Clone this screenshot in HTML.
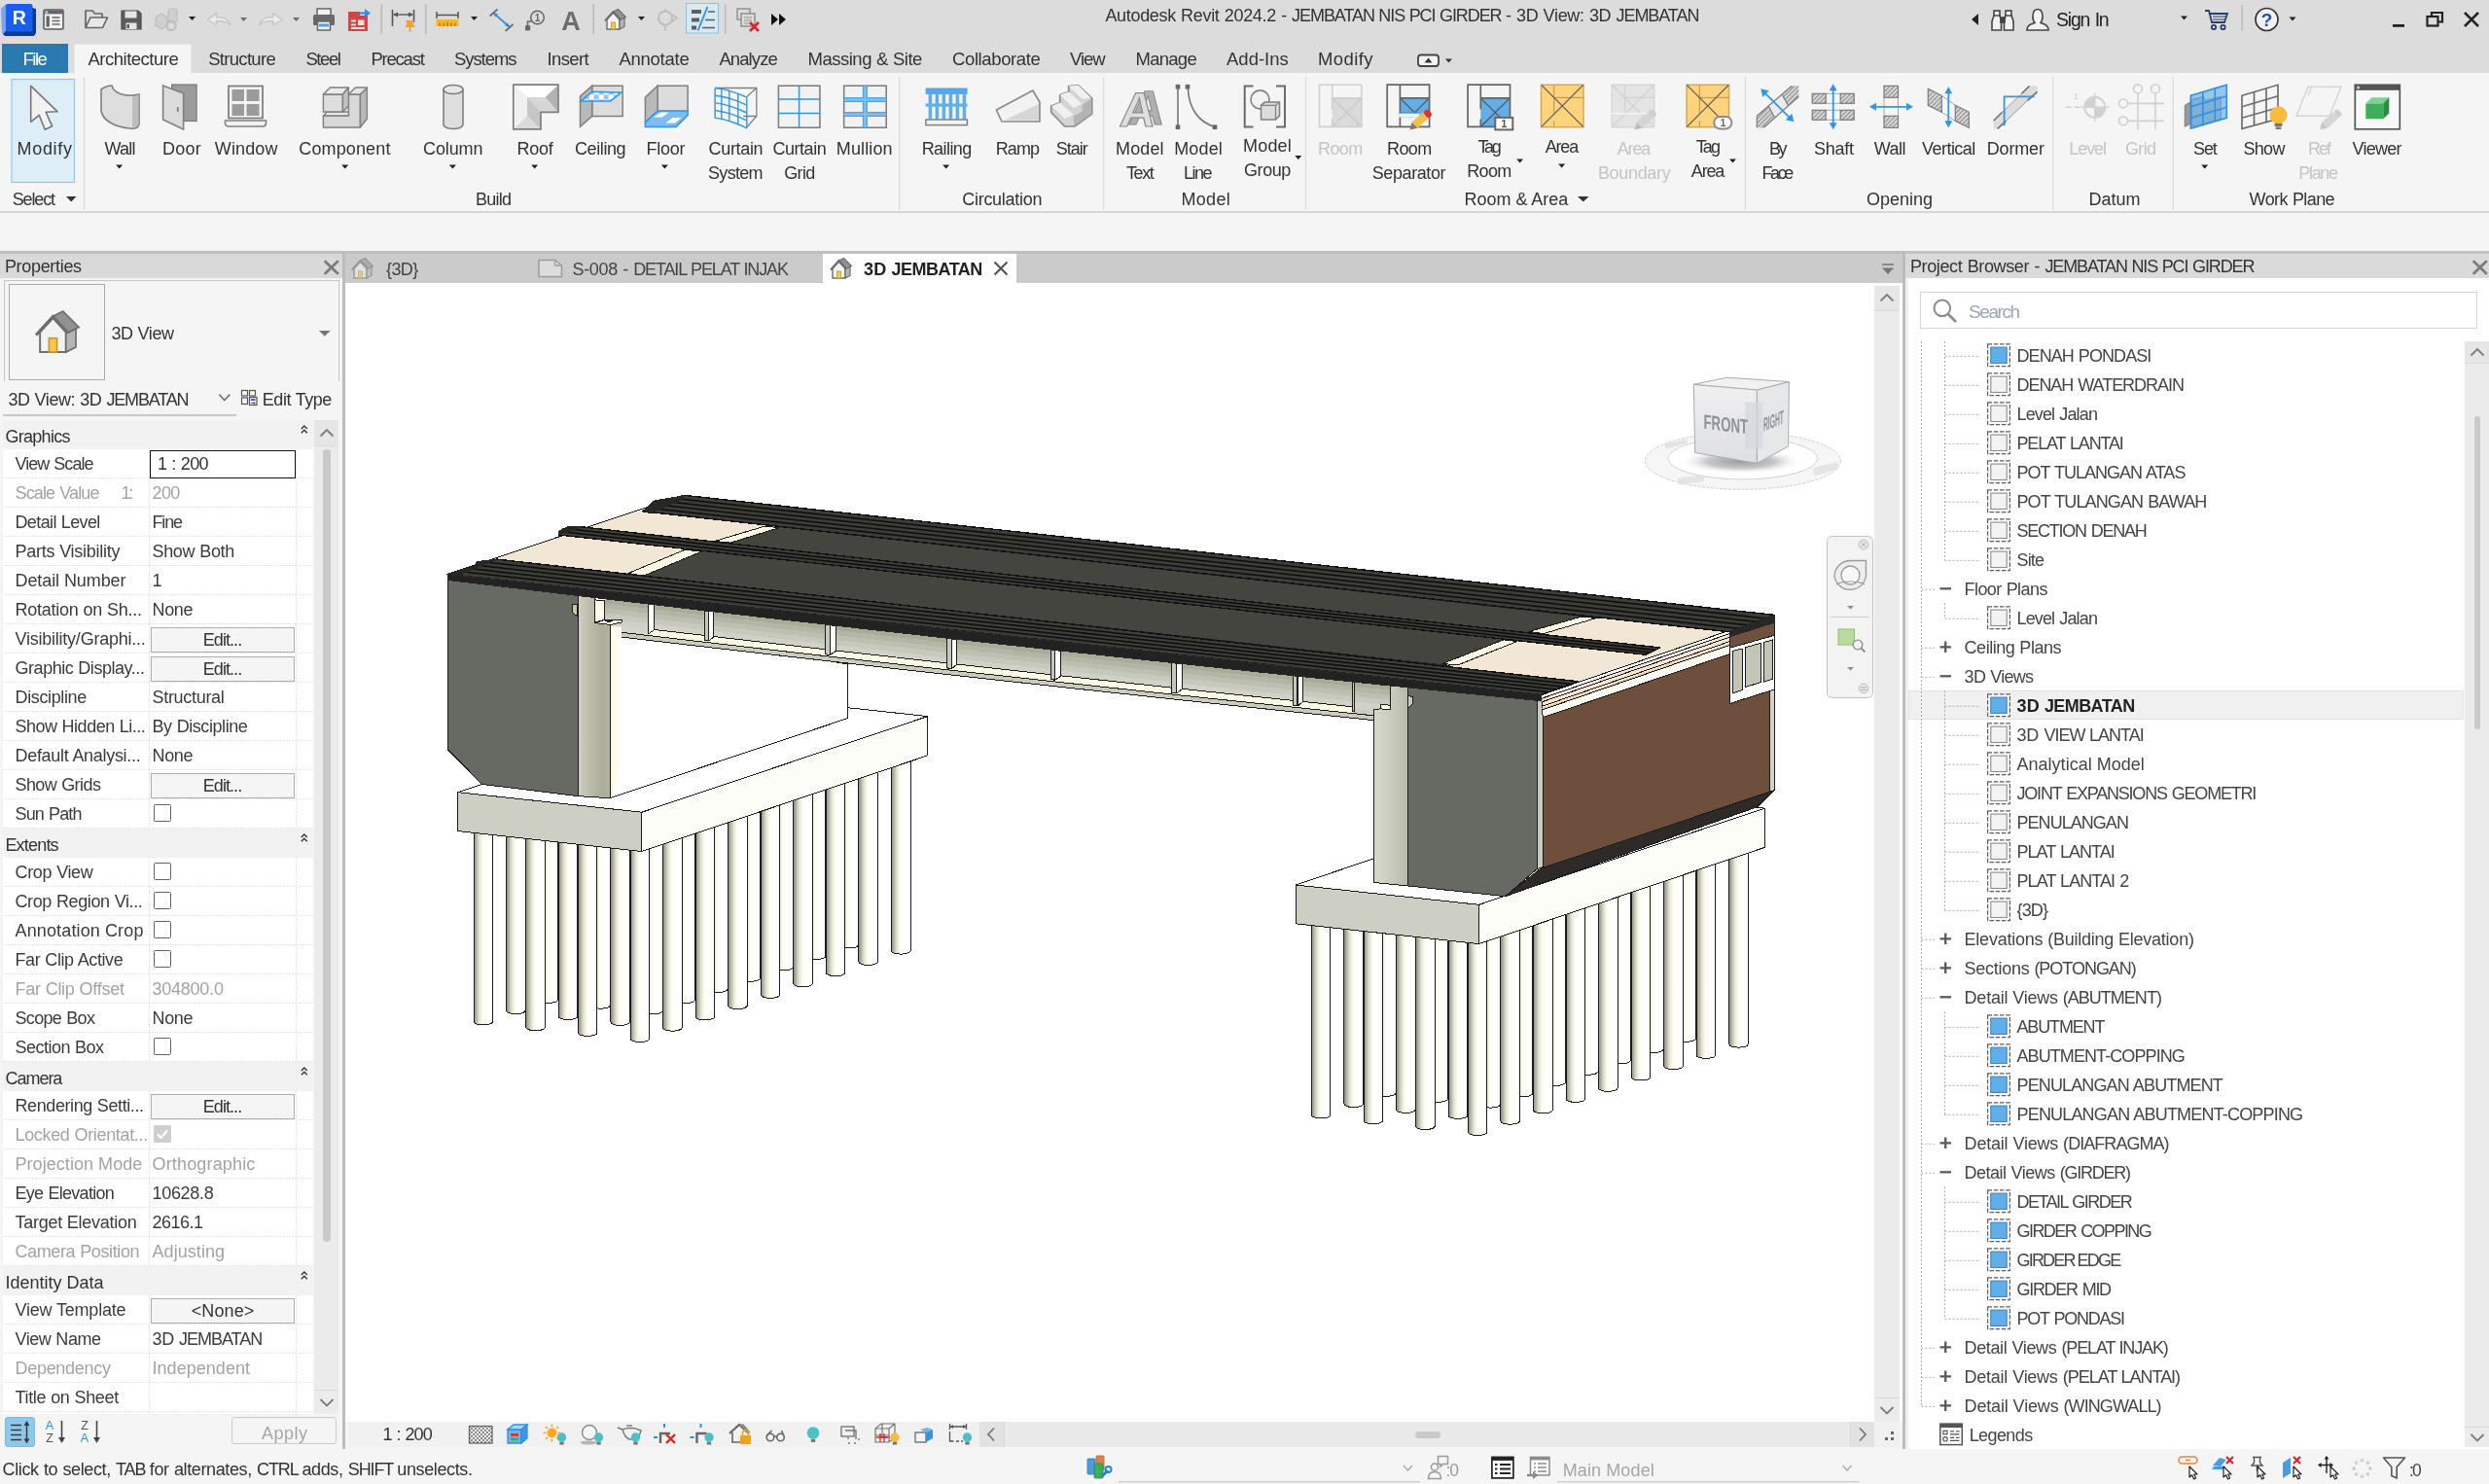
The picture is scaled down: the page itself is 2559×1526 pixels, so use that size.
<!DOCTYPE html><html><head><meta charset="utf-8"><title>Autodesk Revit 2024.2</title><style>
html,body{margin:0;padding:0;}body{width:2559px;height:1526px;position:relative;overflow:hidden;background:#f5f5f5;font-family:"Liberation Sans", sans-serif;}.a{position:absolute;display:block;}.t{position:absolute;white-space:pre;line-height:1;}
</style></head><body><div id="root" style="position:absolute;left:0;top:0;width:2559px;height:1526px;will-change:transform;">
<div class="a" style="left:0px;top:0px;width:2559px;height:76px;background:#dcdcdc;"></div>
<div class="a" style="left:0px;top:75px;width:2559px;height:143px;background:#f5f5f5;"></div>
<div class="a" style="left:0px;top:217px;width:2559px;height:2px;background:#d5d5d5;"></div>
<div class="a" style="left:0px;top:219px;width:2559px;height:39px;background:#f5f5f5;"></div>
<div class="a" style="left:0px;top:258px;width:2559px;height:3px;background:#bfbfbf;"></div>
<svg class="a" style="left:0px;top:0px;" width="2559" height="42" viewBox="0 0 2559 42"><polygon points="3,35 6,31 33,31 33,8 37,9 37,34 35,37 5,37" fill="#0b3b96"/><polygon points="1,9 6,4 6,32 2,35" fill="#79a4f0"/><rect x="6" y="4" width="27.5" height="28.5" rx="2" fill="#1a5ef0"/><text x="19.8" y="25.2" font-family="Liberation Sans, sans-serif" font-weight="700" font-size="19.5" fill="#fff" text-anchor="middle">R</text><g transform="translate(44,9)"><rect x="1" y="1" width="20" height="20" rx="1.5" fill="#f2f2f2" stroke="#5a5a5a" stroke-width="1.6"/><rect x="1.8" y="1.8" width="18.4" height="3.6" fill="#666"/><rect x="2.5" y="2.3" width="2.6" height="2.6" fill="#9ec9ee"/><rect x="3.5" y="7.5" width="3.4" height="11" fill="#666"/><path d="M9.5,9h8M9.5,12.5h8M9.5,16h8" stroke="#666" stroke-width="1.5"/></g><g transform="translate(87,10)" fill="none" stroke="#666" stroke-width="1.7" stroke-linejoin="round"><path d="M1,18V1h7l2.5,3h7.5v4"/><path d="M1,18.5l5-10.5h17.5l-5,10.5z" fill="#e8e8e8"/></g><g transform="translate(124,10)"><path d="M1,1h17l3,3v16h-20z" fill="#5c5c5c" stroke="#4a4a4a" stroke-width="1.2"/><rect x="4.5" y="1.5" width="12" height="7" fill="#e4e4e4"/><rect x="5.5" y="13.5" width="11" height="6.5" fill="#e4e4e4"/><rect x="6.5" y="15" width="2.5" height="4" fill="#5c5c5c"/></g><g transform="translate(159,8)" fill="#cfcfcf" stroke="#bdbdbd" stroke-width="1.2"><path d="M1,10l6-4 6,4v8l-6,4-6-4z"/><rect x="14" y="1" width="9" height="14" rx="3"/><circle cx="17" cy="18.5" r="4.6" fill="none" stroke-width="2"/></g><polygon points="194,17 201,17 197.5,21" fill="#222"/><g fill="#ececec" stroke="#c6c6c6" stroke-width="1.4" stroke-linejoin="round"><path d="M213.5,20.5l9-7v4c8,0 13,2 14,8c-3-3.5-7-4-14-4v4z"/><path d="M290,20.5l-9-7v4c-8,0-13,2-14,8c3-3.5 7-4 14-4v4z"/></g><polygon points="247,18 254,18 250.5,22" fill="#6c6c6c"/><polygon points="301,18 308,18 304.5,22" fill="#6c6c6c"/><g transform="translate(321,8)"><rect x="5" y="1" width="14" height="7" fill="#f2f2f2" stroke="#666" stroke-width="1.5"/><rect x="1" y="7" width="22" height="11" rx="1.5" fill="#6a6a6a"/><rect x="5.5" y="14" width="13" height="9" fill="#f2f2f2" stroke="#666" stroke-width="1.5"/><rect x="7" y="16.5" width="10" height="3" fill="#4aa0e6"/></g><g transform="translate(357,9)"><path d="M1,3h12l0,4h8v16h-20z" fill="#cf4646"/><path d="M4,12.5h5M4,16.5h5M4,20h14" stroke="#f6dede" stroke-width="1.8"/><rect x="11" y="11.5" width="6.5" height="5.5" fill="#f6dede"/><path d="M12,4.5h8" stroke="#2b8fe6" stroke-width="2.2"/><polygon points="18,0 24,4.5 18,9" fill="#2b8fe6"/></g><rect x="391.5" y="4" width="1.5" height="31" fill="#b9b9b9"/><g transform="translate(402,9)"><path d="M1.5,1v17M23.5,1v13" stroke="#555" stroke-width="1.6"/><path d="M3,6h19" stroke="#555" stroke-width="1.4"/><polygon points="2,6 7,3.5 7,8.5" fill="#555"/><polygon points="23,6 18,3.5 18,8.5" fill="#555"/><path d="M15,12h9l-1.5,3 2,4h-10l2-4z" fill="#f2a21c"/><path d="M19.5,19v5" stroke="#f2a21c" stroke-width="1.6"/></g><rect x="437" y="4" width="1.5" height="31" fill="#b9b9b9"/><g transform="translate(448,12)"><path d="M1,0v7M23,0v7M1,3.5h22" stroke="#555" stroke-width="1.5" fill="none"/><rect x="0.5" y="8" width="23" height="7" fill="#f4b32c"/><path d="M4,11.5v3.5M8,11.5v3.5M12,10.5v4.5M16,11.5v3.5M20,11.5v3.5" stroke="#9a6a00" stroke-width="1"/></g><polygon points="484,17 491,17 487.5,21" fill="#222"/><g transform="translate(503,8)"><path d="M4.500,5.500L20.500,19.500" stroke="#2b8fe6" stroke-width="1.700"/><polygon points="4,5 9,6.500 6,9.500" fill="#2b8fe6"/><polygon points="21,20 16,18.500 19,15.500" fill="#2b8fe6"/><path d="M0.500,8.500l8-7M16.500,24l8-7" stroke="#6a6a6a" stroke-width="1.700"/></g><g transform="translate(540,10)" fill="none" stroke="#666" stroke-width="1.5"><circle cx="12.5" cy="8" r="6.8"/><path d="M2.5,18v-6h4" /><rect x="0.8" y="17" width="3.6" height="3.6" fill="#666"/></g><text x="552.5" y="22" font-family="Liberation Sans, sans-serif" font-size="10" font-weight="700" fill="#666" text-anchor="middle">1</text><text x="587" y="30.5" font-family="Liberation Sans, sans-serif" font-size="28.5" font-weight="700" fill="#6e6e6e" text-anchor="middle" textLength="19.5" lengthAdjust="spacingAndGlyphs">A</text><rect x="609.5" y="4" width="1.5" height="31" fill="#b9b9b9"/><g transform="translate(621,9) scale(1.0)" opacity="1"><polygon points="3,11 3,21 16,21 16,11 9.5,4" fill="#f2f2f2" stroke="#6e6e6e" stroke-width="1.40"/><polygon points="16,11 21,9 21,18.5 16,21" fill="#b5b5b5" stroke="#6e6e6e" stroke-width="1.20"/><polygon points="9.5,3 14.5,0.5 22.5,8.5 16.5,11.5" fill="#929292" stroke="#6e6e6e" stroke-width="1.20"/><path d="M1,12.5L9.5,3.2L17,11.5" fill="none" stroke="#6e6e6e" stroke-width="2.20"/><rect x="7.5" y="14" width="4" height="7" fill="#f2c94c" stroke="#c49a2a" stroke-width="0.8"/></g><polygon points="656,17 663,17 659.5,21" fill="#222"/><g fill="none" stroke="#bdbdbd" stroke-width="2"><circle cx="684" cy="18.500" r="7"/><path d="M684,8.500v3M684,25.500v6M691,15l5,3.500-5,3.500" stroke-width="1.600"/></g><rect x="705.5" y="3.5" width="33" height="30.5" fill="#d6e9f5" stroke="#86c3ea" stroke-width="1"/><path d="M711,12h10M711,20.500h8M711,28.500h5" stroke="#5e5e5e" stroke-width="4"/><path d="M728,12h7M725,20.500h10M722,28.500h13" stroke="#5e5e5e" stroke-width="1.500"/><path d="M727.500,7L717.500,31.500" stroke="#2b8fe6" stroke-width="1.800"/><rect x="745" y="4" width="1.5" height="31" fill="#b9b9b9"/><g transform="translate(757,8)" fill="none" stroke="#909090" stroke-width="1.5"><rect x="1" y="1" width="13" height="11"/><rect x="5" y="6" width="14" height="13" fill="#dcdcdc"/><path d="M8,10h8M8,13h8M8,16h5" stroke-width="1.2"/><path d="M14,15l9,9M23,15l-9,9" stroke="#e02222" stroke-width="2.6"/></g><polygon points="793,14 800,20 793,26" fill="#111"/><polygon points="801,14 808,20 801,26" fill="#111"/><polygon points="2034,14 2034,26 2027,20" fill="#222"/><g transform="translate(2047,10)" fill="#f2f2f2" stroke="#444" stroke-width="1.6"><rect x="3" y="1" width="6" height="6"/><rect x="15" y="1" width="6" height="6"/><path d="M1,21v-9l2-6h6l1.5,6v9z"/><path d="M13.5,21v-9l1.5-6h6l2,6v9z"/><rect x="10" y="8" width="4" height="5" fill="#444"/></g><g transform="translate(2083,8)" fill="#f2f2f2" stroke="#444" stroke-width="1.6"><path d="M1,23c0-5 4-6 8-7.5c-3-4-3-14 3-14s6,10 3,14c4,1.5 8,2.5 8,7.5z"/></g><polygon points="2242,16.5 2249,16.5 2245.5,20.5" fill="#222"/><g transform="translate(2267,9)" fill="none" stroke="#2b3f6a" stroke-width="1.8"><path d="M0,2h4l3,12h13l3-9h-18"/><path d="M8,8h13M8,11h12" stroke-width="1"/><circle cx="9" cy="19" r="2.2"/><circle cx="18.5" cy="19" r="2.2"/></g><rect x="2304.5" y="5" width="1.3" height="27" fill="#b9b9b9"/><circle cx="2330.5" cy="20" r="11.5" fill="#f2f2f2" stroke="#333" stroke-width="1.7"/><text x="2330.5" y="27" font-family="Liberation Sans, sans-serif" font-size="19" font-weight="700" fill="#1d4fb8" text-anchor="middle">?</text><polygon points="2353.5,17.5 2360.5,17.5 2357.0,21.5" fill="#222"/><rect x="2460" y="25" width="12" height="2.8" fill="#222"/><g fill="none" stroke="#222" stroke-width="2.2"><rect x="2495.5" y="17" width="11" height="9.5"/><path d="M2500,16.5v-3.5h11v9.5h-4"/><path d="M2534,13l14,14M2548,13l-14,14" stroke-width="2.6"/></g></svg>
<span class="t" style="left:1136.40px;top:7.46px;font-size:18px;color:#333;letter-spacing:-0.321px;word-spacing:0.571px;">Autodesk Revit 2024.2 - <span style="letter-spacing:-1.071px">JEMBATAN NIS PCI GIRDER </span>- 3D View: 3D <span style="letter-spacing:-1.071px">JEMBATAN</span></span>
<span class="t" style="left:2114.00px;top:11.29px;font-size:19.5px;color:#222;letter-spacing:-1.204px;word-spacing:1.204px;">Sign In</span>
<div class="a" style="left:2px;top:45px;width:68px;height:30px;background:#2a79b1;"></div>
<div class="a" style="left:76px;top:45px;width:121px;height:31px;background:#f5f5f5;border:1px solid #e8e8e8;border-bottom:none;box-sizing:border-box;"></div>
<span class="t" style="left:23.50px;top:51.94px;font-size:18.5px;color:#fff;letter-spacing:-1.504px;">File</span>
<span class="t" style="left:90.50px;top:51.94px;font-size:18.5px;color:#333;letter-spacing:-0.502px;">Architecture</span>
<span class="t" style="left:214.20px;top:51.94px;font-size:18.5px;color:#333;letter-spacing:-0.695px;">Structure</span>
<span class="t" style="left:314.40px;top:51.94px;font-size:18.5px;color:#333;letter-spacing:-1.418px;">Steel</span>
<span class="t" style="left:381.50px;top:51.94px;font-size:18.5px;color:#333;letter-spacing:-1.236px;">Precast</span>
<span class="t" style="left:467.00px;top:51.94px;font-size:18.5px;color:#333;letter-spacing:-1.073px;">Systems</span>
<span class="t" style="left:562.60px;top:51.94px;font-size:18.5px;color:#333;letter-spacing:-0.636px;">Insert</span>
<span class="t" style="left:636.40px;top:51.94px;font-size:18.5px;color:#333;letter-spacing:-0.254px;">Annotate</span>
<span class="t" style="left:739.40px;top:51.94px;font-size:18.5px;color:#333;letter-spacing:-0.905px;">Analyze</span>
<span class="t" style="left:830.60px;top:51.94px;font-size:18.5px;color:#333;letter-spacing:-0.508px;word-spacing:0.508px;">Massing &amp; Site</span>
<span class="t" style="left:979.00px;top:51.94px;font-size:18.5px;color:#333;letter-spacing:-0.383px;">Collaborate</span>
<span class="t" style="left:1100.00px;top:51.94px;font-size:18.5px;color:#333;letter-spacing:-1.022px;">View</span>
<span class="t" style="left:1167.50px;top:51.94px;font-size:18.5px;color:#333;letter-spacing:-0.732px;">Manage</span>
<span class="t" style="left:1261.00px;top:51.94px;font-size:18.5px;color:#333;letter-spacing:0.006px;">Add-Ins</span>
<span class="t" style="left:1355.00px;top:51.94px;font-size:18.5px;color:#333;letter-spacing:0.400px;">Modify</span>
<svg class="a" style="left:1455px;top:50px;" width="45" height="22" viewBox="0 0 45 22"><rect x="3" y="6.5" width="21" height="11.5" rx="3" fill="#f4f4f4" stroke="#444" stroke-width="1.8"/><polygon points="9.5,14.5 17.5,14.5 13.5,9.5" fill="#333"/><polygon points="31,10.5 38,10.5 34.5,14.5" fill="#333"/></svg>
<svg class="a" style="left:0px;top:76px;" width="2559" height="142" viewBox="0 0 2559 142"><defs><pattern id="hz" width="3.2" height="3.2" patternUnits="userSpaceOnUse" patternTransform="rotate(45)"><rect width="3.2" height="3.2" fill="#d9d9d9"/><rect width="1.100" height="3.2" fill="#8a8a8a"/></pattern><pattern id="ck" width="10" height="10" patternUnits="userSpaceOnUse"><rect width="10" height="10" fill="#8fc7f3"/><rect width="5" height="5" fill="#fff"/><rect x="5" y="5" width="5" height="5" fill="#fff"/></pattern></defs><rect x="12" y="5.5" width="64.5" height="106" fill="#ddeef7" stroke="#8ccbf0" stroke-width="1.2"/><g transform="translate(30.7,11.3)"><polygon points="1,1 1,38 9.5,31 15.5,46 23,42.5 16.5,28 28.5,27.5" fill="#f2f2f2" stroke="#777" stroke-width="1.6" stroke-linejoin="round"/></g><rect x="85.9" y="3" width="1.3" height="137" fill="#dcdcdc"/><rect x="924.0" y="3" width="1.3" height="137" fill="#dcdcdc"/><rect x="1133.9" y="3" width="1.3" height="137" fill="#dcdcdc"/><rect x="1341.8000000000002" y="3" width="1.3" height="137" fill="#dcdcdc"/><rect x="1793.8000000000002" y="3" width="1.3" height="137" fill="#dcdcdc"/><rect x="2110.1" y="3" width="1.3" height="137" fill="#dcdcdc"/><rect x="2233.6" y="3" width="1.3" height="137" fill="#dcdcdc"/><g transform="translate(103.0,11.0)"><path d="M1,5C5,2 8,1 12,1C14,10 28,13 40,10V40C40,44 36,46 31,45C17,44 3,38 1,27Z" fill="#dedede" stroke="#808080" stroke-width="1.6"/><path d="M33,12.5L39.5,10.5V40C39.5,43 36,45 33,44.5Z" fill="#bdbdbd"/></g><g transform="translate(166.6,10.0)"><rect x="10" y="1" width="25.5" height="37.5" fill="#9b9b9b" stroke="#7a7a7a" stroke-width="1.2"/><polygon points="1,2 22,10 22,47 1,37" fill="#dcdcdc" stroke="#808080" stroke-width="1.6"/><rect x="15.3" y="24" width="1.8" height="5" fill="#808080"/></g><g transform="translate(230.5,11.5)"><rect x="4.5" y="1" width="35" height="33" fill="#f4f4f4" stroke="#808080" stroke-width="1.8"/><rect x="8" y="4.5" width="12.5" height="12" fill="#9b9b9b"/><rect x="23" y="4.5" width="13" height="12" fill="#9b9b9b"/><rect x="8" y="19.5" width="12.5" height="12" fill="#9b9b9b"/><rect x="23" y="19.5" width="13" height="12" fill="#9b9b9b"/><path d="M1,36.5h42v2.5c0,2-1.5,3.5-3.5,3.5h-35c-2,0-3.500-1.500-3.500-3.500z" fill="#f2f2f2" stroke="#808080" stroke-width="1.6"/></g><g transform="translate(332.4,13.0)"><g stroke="#808080" stroke-width="1.4" stroke-linejoin="round"><polygon points="0,30 26,30 26,8 38,8 38,42 0,42" fill="#d9d9d9"/><polygon points="38,8 45,1 45,33 38,42" fill="#b8b8b8"/><polygon points="26,8 33,1 45,1 38,8" fill="#e6e6e6"/><polygon points="0,30 4,26 26,26 26,30" fill="#e6e6e6"/><polygon points="0,8 20,8 20,26 0,26" fill="#dedede"/><polygon points="0,8 7,1 26,1 20,8" fill="#ebebeb"/><polygon points="20,8 26,1 26,20 20,26" fill="#c2c2c2"/></g></g><g transform="translate(455.0,10.0)"><path d="M1,6v36a10,4.500 0 0 0 20,0v-36z" fill="#dedede" stroke="#808080" stroke-width="1.6"/><ellipse cx="11" cy="6" rx="10" ry="4.500" fill="#e8e8e8" stroke="#808080" stroke-width="1.6"/></g><g transform="translate(527.0,10.4)"><polygon points="0.8,0.8 47,0.8 33.500,13.500 15,13.500" fill="#fff"/><polygon points="0.8,0.8 15,13.500 15,33 0.8,46.500" fill="#f0f0f0"/><polygon points="47,0.8 47,29 33.500,13.500" fill="#b2b2b2"/><polygon points="15,13.500 33.500,13.500 47,29 29,29" fill="#d6d6d6"/><polygon points="15,13.500 29,29 29,46.500 15,33" fill="#c6c6c6"/><polygon points="0.8,46.500 15,33 29,46.500" fill="#dadada"/><polygon points="0.8,0.8 47,0.8 47,29 29,29 29,46.500 0.8,46.500" fill="none" stroke="#808080" stroke-width="1.7"/></g><g transform="translate(595.7,11.4)"><polygon points="13,0.8 44.500,0.8 44.500,32 13,32" fill="#dcdcdc" stroke="#808080" stroke-width="1.500"/><polygon points="0.8,11.7 13,0.8 13,32 0.8,43" fill="#b9b9b9" stroke="#808080" stroke-width="1.500"/><polygon points="1.500,16.500 13,6.800 43,7.800 32,16.500" fill="url(#ck)" stroke="#2f96ea" stroke-width="1.500"/></g><g transform="translate(662.6,11.4)"><polygon points="13.500,0.8 44.500,0.8 44.500,27 13.500,27" fill="#dcdcdc" stroke="#808080" stroke-width="1.500"/><polygon points="0.8,12.700 13.500,0.8 13.500,27 0.8,38.500" fill="#b9b9b9" stroke="#808080" stroke-width="1.500"/><polygon points="0.8,38.500 13.500,26.700 44.500,26.700 44.500,31 32.500,43 0.8,43" fill="#7fbdf0" stroke="#2f96ea" stroke-width="1.500"/><polygon points="9,33 17,28 25,28 18,33" fill="#fff"/><polygon points="22,39 29,33.500 38,33.500 31.500,39" fill="#fff"/></g><g transform="translate(734.3,13.0)"><path d="M0.8,1.500H43.500V30.500L33.500,41.800M43.500,1.500L33.500,10.500M43.500,30.500H30" fill="none" stroke="#808080" stroke-width="1.300"/><polyline points="0.8,1.5 5.0,2.0 10.0,2.9 15.0,4.2 20.0,5.8 25.0,7.6 29.0,9.2 33.5,11.2" fill="none" stroke="#2f96ea" stroke-width="1.400"/><polyline points="0.8,9.2 5.0,9.7 10.0,10.7 15.0,12.0 20.0,13.6 25.0,15.4 29.0,17.1 33.5,19.1" fill="none" stroke="#2f96ea" stroke-width="1.400"/><polyline points="0.8,16.9 5.0,17.4 10.0,18.4 15.0,19.8 20.0,21.4 25.0,23.3 29.0,25.0 33.5,27.0" fill="none" stroke="#2f96ea" stroke-width="1.400"/><polyline points="0.8,24.6 5.0,25.2 10.0,26.2 15.0,27.6 20.0,29.2 25.0,31.1 29.0,32.9 33.5,34.9" fill="none" stroke="#2f96ea" stroke-width="1.400"/><polyline points="0.8,32.3 5.0,32.9 10.0,33.9 15.0,35.4 20.0,37.0 25.0,39.0 29.0,40.7 33.5,42.8" fill="none" stroke="#2f96ea" stroke-width="1.400"/><path d="M0.8,1.5V32.3" stroke="#2f96ea" stroke-width="1.400"/><path d="M7.5,2.4V33.4" stroke="#2f96ea" stroke-width="1.400"/><path d="M15.5,4.3V35.5" stroke="#2f96ea" stroke-width="1.400"/><path d="M24.5,7.4V38.8" stroke="#2f96ea" stroke-width="1.400"/><path d="M33.5,11.2V42.8" stroke="#2f96ea" stroke-width="1.400"/></g><g transform="translate(799.6,11.4)"><rect x="0.8" y="0.8" width="42.500" height="43" fill="#f2f2f2" stroke="#808080" stroke-width="1.600"/><path d="M22,1V43.500M1,14.500H43M1,29H43" stroke="#2f96ea" stroke-width="1.500"/></g><g transform="translate(866.9,11.4)"><rect x="0.8" y="0.8" width="43.500" height="43" fill="#f2f2f2" stroke="#808080" stroke-width="1.600"/><path d="M22.500,1V43.500M1,15H44M1,30H44" stroke="#4fa0e4" stroke-width="5"/><path d="M22.500,1V43.500M1,15H44M1,30H44" stroke="#7fc0f2" stroke-width="2.5"/></g><g transform="translate(951.1,14.5)"><rect x="0.5" y="0" width="43" height="6.500" fill="#57a6e6"/><rect x="0.5" y="16" width="43" height="3.200" fill="#62aee8"/><rect x="3.5" y="5" width="3.600" height="27" fill="#62aee8"/><rect x="10.5" y="5" width="3.600" height="27" fill="#62aee8"/><rect x="17.5" y="5" width="3.600" height="27" fill="#62aee8"/><rect x="24.5" y="5" width="3.600" height="27" fill="#62aee8"/><rect x="31.5" y="5" width="3.600" height="27" fill="#62aee8"/><rect x="38.5" y="5" width="3.600" height="27" fill="#62aee8"/><rect x="0.8" y="32.500" width="42.500" height="5.600" fill="#f4f4f4" stroke="#808080" stroke-width="1.500"/></g><g transform="translate(1023.4,16.0)"><polygon points="1,21 38.500,1 45.500,13 45.500,33 6.500,33" fill="#f2f2f2" stroke="#8a8a8a" stroke-width="1.700" stroke-linejoin="round"/><polygon points="9.500,31.500 44.500,15 44.500,31.500" fill="#d6d6d6"/></g><g transform="translate(1079.7,11.0)"><polygon points="1,22 10,18.500 10,10.500 19,7.500 19,1.500 29,0.8 43,14 43,30 25,43 15,43 1,28.500" fill="#d4d4d4" stroke="#8a8a8a" stroke-width="1.700" stroke-linejoin="round"/><polygon points="10,10.500 19,7.500 33,20 24,24" fill="#f0f0f0"/><polygon points="19,1.500 29,0.8 42,13.500 33,15" fill="#f0f0f0"/><polygon points="1.500,22 10,18.500 24,31 15,35" fill="#f0f0f0"/><polygon points="25,42.500 42.500,30 42.500,14.500 33,20.500 33,28 24,32 24,36" fill="#b4b4b4"/></g><g transform="translate(1148.6,13.0)"><text x="33" y="39" font-family="Liberation Sans, sans-serif" font-weight="700" font-size="50" fill="#b0b0b0" stroke="#8a8a8a" stroke-width="1" text-anchor="middle" transform="skewX(-6)">A</text><text x="24" y="40.500" font-family="Liberation Sans, sans-serif" font-weight="700" font-size="50" fill="#dedede" stroke="#8a8a8a" stroke-width="1.200" text-anchor="middle" transform="skewX(-6)">A</text></g><g transform="translate(1208.2,10.4)"><path d="M2.800,4V43M13,4Q15,36 40.500,44" fill="none" stroke="#777" stroke-width="1.600"/><rect x="0.500" y="0.500" width="4.600" height="4.600" fill="#666"/><rect x="0.500" y="42" width="4.600" height="4.600" fill="#666"/><rect x="10.500" y="0.500" width="4.600" height="4.600" fill="#666"/><rect x="38.500" y="42" width="4.600" height="4.600" fill="#666"/></g><g transform="translate(1278.5,11.4)"><path d="M10,1.200H1.200V43H10M33.500,1.200H42.500V43H33.500" fill="none" stroke="#6a6a6a" stroke-width="2"/><circle cx="17" cy="15" r="9.500" fill="#f2f2f2" stroke="#808080" stroke-width="1.600"/><path d="M18,21l4-3.500h15v14l-4,4h-15z" fill="#dcdcdc" stroke="#808080" stroke-width="1.500" stroke-linejoin="round"/><path d="M33,21v14.500M18,21h15l4-3.500" fill="none" stroke="#808080" stroke-width="1.200"/></g><g transform="translate(1355.7,10.4)"><rect x="14" y="14.500" width="30" height="29.500" fill="#dadada"/><path d="M14,14.500L44,44M44,14.500L14,44" stroke="#c6c6c6" stroke-width="1.300"/><path d="M0.800,0.800H44.200V44H0.800ZM14,0.800V26M14,36V44M14,14.500H44" fill="none" stroke="#d0d0d0" stroke-width="1.600"/></g><g transform="translate(1425.4,10.4)"><rect x="14" y="14.500" width="30" height="20" fill="#62aee8"/><path d="M14,14.500L34,34.500M44,14.500L24,34.500" stroke="#555" stroke-width="1.300"/><path d="M0.800,0.800H44.200V44H0.800ZM14,0.800V44M14,14.500H44" fill="none" stroke="#666" stroke-width="1.700"/><path d="M14,29.500H33" stroke="#2f96ea" stroke-width="1.500"/><rect x="13" y="30.300" width="21" height="4" fill="#f4f4f4"/><g transform="translate(24,47) rotate(-42)"><polygon points="0,0 7,-4.200 7,4.200" fill="#7a7a7a"/><rect x="7" y="-4.200" width="15" height="8.400" fill="#f3c04a"/><rect x="22" y="-4.200" width="6" height="8.400" rx="2.500" fill="#ee2b2b"/></g></g><g transform="translate(1508.3,10.4)"><rect x="14" y="14.500" width="30" height="29.500" fill="#62aee8"/><path d="M14,14.500L44,44M44,14.500L14,44" stroke="#555" stroke-width="1.300"/><path d="M0.800,0.800H44.200V44H0.800ZM14,0.800V26M14,36V44M14,14.500H44" fill="none" stroke="#666" stroke-width="1.700"/><rect x="29" y="34.500" width="18" height="12.500" fill="#fff" stroke="#666" stroke-width="2"/><text x="38" y="45" font-family="Liberation Sans, sans-serif" font-weight="700" font-size="11" fill="#555" text-anchor="middle">1</text></g><g transform="translate(1583.7,10.4)"><rect x="0.800" y="0.800" width="43.500" height="43.500" fill="#fdd37e" stroke="#d6aa50" stroke-width="1.500"/><path d="M14,1V30M14,14H44M14,38V44" stroke="#b89244" stroke-width="1"/><path d="M1,1L44,44M44,1L1,44" stroke="#5e5e5e" stroke-width="1.300"/></g><g transform="translate(1656.4,10.4)"><rect x="0.800" y="0.800" width="43.500" height="43.500" fill="#e4e4e4" stroke="#d4d4d4" stroke-width="1.300"/><path d="M14,1V30M14,14H44" stroke="#d0d0d0" stroke-width="1"/><path d="M1,1L44,44M44,1L1,44" stroke="#cfcfcf" stroke-width="1.300"/><rect x="0" y="29.500" width="45" height="1.500" fill="#f5f5f5"/><g transform="translate(24,47) rotate(-42)"><polygon points="0,0 7,-4.200 7,4.200" fill="#bdbdbd"/><rect x="7" y="-4.200" width="15" height="8.400" fill="#d4d4d4"/><rect x="22" y="-4.200" width="6" height="8.400" rx="2.500" fill="#cfcfcf"/></g></g><g transform="translate(1733.3,10.4)"><rect x="0.800" y="0.800" width="43.500" height="43.500" fill="#fdd37e" stroke="#d6aa50" stroke-width="1.500"/><path d="M14,1V30M14,14H44M14,38V44" stroke="#b89244" stroke-width="1"/><path d="M1,1L44,44M44,1L1,44" stroke="#5e5e5e" stroke-width="1.300"/><rect x="29" y="33.500" width="18" height="12.500" rx="6" fill="#fff" stroke="#8a8a8a" stroke-width="2"/><text x="38" y="43.800" font-family="Liberation Sans, sans-serif" font-weight="700" font-size="10.500" fill="#666" text-anchor="middle">1</text></g><g transform="translate(1805.3,10.3)"><polygon points="13,23 27,11 33,22 19,34" fill="#ebebeb"/><polygon points="1,33 13,23 19,34 8,45 1,45" fill="url(#hz)"/><polygon points="27,11 37,2 44,2 44,13 33,22" fill="url(#hz)"/><path d="M1,33L37,2M8,45L44,13M1,33V45M13,23L19,34M27,11L33,22" stroke="#7a7a7a" stroke-width="1.200" fill="none"/><path d="M9,9L35,35" stroke="#2f96ea" stroke-width="1.800"/><polygon points="5,5 13.500,7 7,13.500" fill="#2f96ea"/><polygon points="39,39 30.500,37 37,30.500" fill="#2f96ea"/></g><g transform="translate(1862.2,10.3)"><path d="M15,10H30M15,20H30M15,27H30M15,37H30" stroke="#a8a8a8" stroke-width="1"/><rect x="1" y="10" width="14" height="10" fill="url(#hz)" stroke="#7a7a7a" stroke-width="1.200"/><rect x="1" y="27" width="14" height="10" fill="url(#hz)" stroke="#7a7a7a" stroke-width="1.200"/><rect x="30" y="10" width="14" height="10" fill="url(#hz)" stroke="#7a7a7a" stroke-width="1.200"/><rect x="30" y="27" width="14" height="10" fill="url(#hz)" stroke="#7a7a7a" stroke-width="1.200"/><path d="M22.500,5V42" stroke="#2f96ea" stroke-width="1.800"/><polygon points="22.500,0 26.500,7 18.500,7" fill="#2f96ea"/><polygon points="22.500,47 26.500,40 18.500,40" fill="#2f96ea"/></g><g transform="translate(1922.0,10.3)"><path d="M15,14V33M29.500,14V33" stroke="#a8a8a8" stroke-width="1"/><rect x="15" y="2" width="14.500" height="12" fill="url(#hz)" stroke="#7a7a7a" stroke-width="1.200"/><rect x="15" y="33" width="14.500" height="12" fill="url(#hz)" stroke="#7a7a7a" stroke-width="1.200"/><path d="M5,23.500H40" stroke="#2f96ea" stroke-width="1.800"/><polygon points="0,23.500 7,19.500 7,27.500" fill="#2f96ea"/><polygon points="45,23.500 38,19.500 38,27.500" fill="#2f96ea"/></g><g transform="translate(1981.3,10.3)"><path d="M15,12L29,22M15,29L29,38" stroke="#a8a8a8" stroke-width="1"/><polygon points="1,5 15,12 15,29 1,22" fill="url(#hz)" stroke="#7a7a7a" stroke-width="1.200"/><polygon points="29,22 43,29 43,45 29,38" fill="url(#hz)" stroke="#7a7a7a" stroke-width="1.200"/><path d="M22,9V40" stroke="#2f96ea" stroke-width="1.800"/><polygon points="22,3 26,10 18,10" fill="#2f96ea"/><polygon points="22,45 26,38 18,38" fill="#2f96ea"/></g><g transform="translate(2048.6,10.3)"><polygon points="1,38 38,2 46,2 46,8 5,46 1,46" fill="#dcdcdc"/><path d="M1,38L10,29M30,10L38,2M5,46L14,38M36,17L46,8" stroke="#6e6e6e" stroke-width="1.600" fill="none"/><path d="M10,29L30,10M14,38L36,17" stroke="#9a9a9a" stroke-width="1" fill="none"/><path d="M12,43V13H43" fill="none" stroke="#2f96ea" stroke-width="1.800"/></g><g transform="translate(2123.8,10.3)"><path d="M0,24h6M9,24h5" stroke="#cfcfcf" stroke-width="1.500"/><circle cx="30" cy="24" r="10.500" fill="none" stroke="#d2d2d2" stroke-width="2"/><path d="M30,13.500A10.500,10.500 0 0 0 19.500,24H30ZM30,34.500A10.500,10.500 0 0 0 40.500,24H30Z" fill="#d2d2d2"/><path d="M30,9V39M15,24H45" stroke="#d2d2d2" stroke-width="1.400"/><text x="8" y="16" font-family="Liberation Sans, sans-serif" font-size="9" fill="#cfcfcf">1</text></g><g transform="translate(2178.0,10.3)"><g fill="#f5f5f5" stroke="#d2d2d2" stroke-width="1.700"><path d="M20,9V47M38,9V47M9,20H47M9,38H47"/><circle cx="20" cy="5" r="4.500"/><circle cx="38" cy="5" r="4.500"/><circle cx="5" cy="20" r="4.500"/><circle cx="5" cy="38" r="4.500"/></g></g><g transform="translate(2245.3,10.3)"><polygon points="1,22 8,18 8,40 1,44" fill="#9a9a9a" stroke="#777" stroke-width="1"/><polygon points="8,16 20,13 22,17 38,13 38,36 8,44" fill="#b9b9b9" stroke="#808080" stroke-width="1"/><polygon points="7,12 44,1 44,35 7,46" fill="#5aa9ea" fill-opacity="0.62" stroke="#2f8fe0" stroke-width="1.600"/><path d="M19.500,8.500V42.500M32,4.800V38.500M7,23.500L44,12.500M7,35L44,24" stroke="#2f8fe0" stroke-width="1.500"/></g><g transform="translate(2304.0,10.3)"><path d="M1,12L38,1V36L1,46ZM13.500,8.300V42.500M26,4.600V39.300M1,23.500L38,12.500M1,35L38,24.500" fill="none" stroke="#6e6e6e" stroke-width="1.700"/><circle cx="38.500" cy="32" r="9" fill="#f9bc3c"/><rect x="34.500" y="40.500" width="8" height="3.200" fill="#777"/><rect x="35.500" y="44.200" width="6" height="2.500" rx="1" fill="#777"/></g><g transform="translate(2361.0,10.3)"><path d="M12,3L46,3L34,33L0,33Z M16,3L12,12 M38,33L34,44" fill="none" stroke="#d6d6d6" stroke-width="1.500"/><g transform="translate(24,47) rotate(-42)"><polygon points="0,0 7,-4.200 7,4.200" fill="#c6c6c6"/><rect x="7" y="-4.200" width="15" height="8.400" fill="#d6d6d6"/><rect x="22" y="-4.200" width="6" height="8.400" rx="2.500" fill="#d0d0d0"/></g></g><g transform="translate(2420.3,10.3)"><rect x="1" y="1" width="46" height="45.500" fill="#f8f8f8" stroke="#555" stroke-width="1.700"/><rect x="1" y="1" width="46" height="5.500" fill="#555"/><rect x="3" y="2.500" width="2.500" height="2.500" fill="#ddd"/><polygon points="12,20 30,20 30,36 12,36" fill="#3fae5a"/><polygon points="12,20 18,14 36,14 30,20" fill="#7fd392"/><polygon points="30,20 36,14 36,30 30,36" fill="#2c8c45"/></g><polygon points="119.1,93.5 126.1,93.5 122.6,97.5" fill="#222"/><polygon points="351.2,93.5 358.2,93.5 354.7,97.5" fill="#222"/><polygon points="461.9,93.5 468.9,93.5 465.4,97.5" fill="#222"/><polygon points="546.1,93.5 553.1,93.5 549.6,97.5" fill="#222"/><polygon points="679.9,93.5 686.9,93.5 683.4,97.5" fill="#222"/><polygon points="969.1,93.5 976.1,93.5 972.6,97.5" fill="#222"/><polygon points="2263.2,93.5 2270.2,93.5 2266.7,97.5" fill="#222"/><polygon points="1602.1,92.5 1609.1,92.5 1605.6,96.5" fill="#222"/><polygon points="1331.3,84 1338.3,84 1334.8,88" fill="#222"/><polygon points="1559.1,87.5 1566.1,87.5 1562.6,91.5" fill="#222"/><polygon points="1778.0,87.5 1785.0,87.5 1781.5,91.5" fill="#222"/><polygon points="68,126 78.5,126 73.25,131.5" fill="#333"/><polygon points="1622,126 1633.5,126 1627.75,131.5" fill="#333"/></svg>
<span class="t" style="left:17.50px;top:144.06px;font-size:18px;color:#333;letter-spacing:0.697px;">Modify</span>
<span class="t" style="left:107.60px;top:144.06px;font-size:18px;color:#333;letter-spacing:-0.848px;">Wall</span>
<span class="t" style="left:167.00px;top:144.06px;font-size:18px;color:#333;letter-spacing:0.228px;">Door</span>
<span class="t" style="left:220.80px;top:144.06px;font-size:18px;color:#333;letter-spacing:0.134px;">Window</span>
<span class="t" style="left:307.30px;top:144.06px;font-size:18px;color:#333;letter-spacing:0.130px;">Component</span>
<span class="t" style="left:435.00px;top:144.06px;font-size:18px;color:#333;letter-spacing:-0.106px;">Column</span>
<span class="t" style="left:531.50px;top:144.06px;font-size:18px;color:#333;letter-spacing:-0.244px;">Roof</span>
<span class="t" style="left:591.00px;top:144.06px;font-size:18px;color:#333;letter-spacing:-0.405px;">Ceiling</span>
<span class="t" style="left:664.60px;top:144.06px;font-size:18px;color:#333;letter-spacing:-0.304px;">Floor</span>
<span class="t" style="left:728.60px;top:144.06px;font-size:18px;color:#333;letter-spacing:-0.339px;">Curtain</span>
<span class="t" style="left:728.00px;top:169.16px;font-size:18px;color:#333;letter-spacing:-0.683px;">System</span>
<span class="t" style="left:794.40px;top:144.06px;font-size:18px;color:#333;letter-spacing:-0.455px;">Curtain</span>
<span class="t" style="left:806.30px;top:169.16px;font-size:18px;color:#333;letter-spacing:-0.705px;">Grid</span>
<span class="t" style="left:859.80px;top:144.06px;font-size:18px;color:#333;letter-spacing:0.128px;">Mullion</span>
<span class="t" style="left:947.70px;top:144.06px;font-size:18px;color:#333;letter-spacing:-0.572px;">Railing</span>
<span class="t" style="left:1023.80px;top:144.06px;font-size:18px;color:#333;letter-spacing:-0.939px;">Ramp</span>
<span class="t" style="left:1085.70px;top:144.06px;font-size:18px;color:#333;letter-spacing:-0.979px;">Stair</span>
<span class="t" style="left:1147.00px;top:144.06px;font-size:18px;color:#333;letter-spacing:0.142px;">Model</span>
<span class="t" style="left:1158.00px;top:169.16px;font-size:18px;color:#333;letter-spacing:-1.439px;">Text</span>
<span class="t" style="left:1207.20px;top:144.06px;font-size:18px;color:#333;letter-spacing:0.142px;">Model</span>
<span class="t" style="left:1216.90px;top:169.16px;font-size:18px;color:#333;letter-spacing:-1.510px;">Line</span>
<span class="t" style="left:1278.10px;top:140.66px;font-size:18px;color:#333;letter-spacing:0.167px;">Model</span>
<span class="t" style="left:1279.00px;top:165.66px;font-size:18px;color:#333;letter-spacing:-0.433px;">Group</span>
<span class="t" style="left:1355.00px;top:144.06px;font-size:18px;color:#c4c4c4;letter-spacing:-0.572px;">Room</span>
<span class="t" style="left:1426.00px;top:144.06px;font-size:18px;color:#333;letter-spacing:-0.605px;">Room</span>
<span class="t" style="left:1410.70px;top:169.16px;font-size:18px;color:#333;letter-spacing:-0.395px;">Separator</span>
<span class="t" style="left:1519.40px;top:142.46px;font-size:18px;color:#333;letter-spacing:-2.266px;">Tag</span>
<span class="t" style="left:1508.30px;top:166.66px;font-size:18px;color:#333;letter-spacing:-0.672px;">Room</span>
<span class="t" style="left:1588.70px;top:142.46px;font-size:18px;color:#333;letter-spacing:-1.177px;">Area</span>
<span class="t" style="left:1662.80px;top:144.06px;font-size:18px;color:#c4c4c4;letter-spacing:-1.210px;">Area</span>
<span class="t" style="left:1642.90px;top:169.16px;font-size:18px;color:#c4c4c4;letter-spacing:-0.323px;">Boundary</span>
<span class="t" style="left:1743.80px;top:142.46px;font-size:18px;color:#333;letter-spacing:-1.966px;">Tag</span>
<span class="t" style="left:1738.80px;top:166.66px;font-size:18px;color:#333;letter-spacing:-1.177px;">Area</span>
<span class="t" style="left:1819.00px;top:144.06px;font-size:18px;color:#333;letter-spacing:-2.616px;">By</span>
<span class="t" style="left:1811.50px;top:169.16px;font-size:18px;color:#333;letter-spacing:-2.410px;">Face</span>
<span class="t" style="left:1865.00px;top:144.06px;font-size:18px;color:#333;letter-spacing:-0.258px;">Shaft</span>
<span class="t" style="left:1926.70px;top:144.06px;font-size:18px;color:#333;letter-spacing:-0.515px;">Wall</span>
<span class="t" style="left:1976.00px;top:144.06px;font-size:18px;color:#333;letter-spacing:-0.533px;">Vertical</span>
<span class="t" style="left:2042.70px;top:144.06px;font-size:18px;color:#333;letter-spacing:-0.143px;">Dormer</span>
<span class="t" style="left:2127.30px;top:144.06px;font-size:18px;color:#c4c4c4;letter-spacing:-1.083px;">Level</span>
<span class="t" style="left:2185.00px;top:144.06px;font-size:18px;color:#c4c4c4;letter-spacing:-0.672px;">Grid</span>
<span class="t" style="left:2255.00px;top:144.06px;font-size:18px;color:#333;letter-spacing:-1.116px;">Set</span>
<span class="t" style="left:2306.40px;top:144.06px;font-size:18px;color:#333;letter-spacing:-0.644px;">Show</span>
<span class="t" style="left:2373.00px;top:144.06px;font-size:18px;color:#c4c4c4;letter-spacing:-2.008px;">Ref</span>
<span class="t" style="left:2363.30px;top:169.16px;font-size:18px;color:#c4c4c4;letter-spacing:-1.337px;">Plane</span>
<span class="t" style="left:2418.50px;top:144.06px;font-size:18px;color:#333;letter-spacing:-0.721px;">Viewer</span>
<span class="t" style="left:12.70px;top:196.46px;font-size:18px;color:#333;letter-spacing:-1.146px;">Select</span>
<span class="t" style="left:488.90px;top:196.46px;font-size:18px;color:#333;letter-spacing:-0.733px;">Build</span>
<span class="t" style="left:989.20px;top:196.46px;font-size:18px;color:#333;letter-spacing:-0.265px;">Circulation</span>
<span class="t" style="left:1214.50px;top:196.46px;font-size:18px;color:#333;letter-spacing:0.292px;">Model</span>
<span class="t" style="left:1505.60px;top:196.46px;font-size:18px;color:#333;letter-spacing:-0.058px;word-spacing:0.058px;">Room &amp; Area</span>
<span class="t" style="left:1919.00px;top:196.46px;font-size:18px;color:#333;letter-spacing:-0.010px;">Opening</span>
<span class="t" style="left:2147.60px;top:196.46px;font-size:18px;color:#333;letter-spacing:-0.054px;">Datum</span>
<span class="t" style="left:2312.60px;top:196.46px;font-size:18px;color:#333;letter-spacing:-0.590px;word-spacing:0.590px;">Work Plane</span>
<div class="a" style="left:0px;top:261px;width:352px;height:1229px;background:#f5f5f5;"></div>
<div class="a" style="left:0px;top:261px;width:352px;height:25px;background:#d9d9d9;"></div>
<div class="a" style="left:352px;top:261px;width:3px;height:1229px;background:#bcbcbc;"></div>
<span class="t" style="left:4.90px;top:264.86px;font-size:18px;color:#333;letter-spacing:-0.316px;">Properties</span>
<svg class="a" style="left:332px;top:266px;" width="18" height="18" viewBox="0 0 18 18"><path d="M2.500,3L15,15M15,3L2.500,15" stroke="#7c7c7c" stroke-width="2.800" stroke-linecap="round"/></svg>
<div class="a" style="left:4px;top:288px;width:345px;height:104px;border:1px solid #c6c6c6;box-sizing:border-box;border-bottom:none;"></div>
<div class="a" style="left:9px;top:292px;width:99px;height:99px;background:#f5f5f5;border:1.5px solid #a9a9a9;box-sizing:border-box;"></div>
<svg class="a" style="left:33px;top:317px;" width="54" height="52" viewBox="0 0 54 52"><g transform="translate(2,2) scale(2.05)" opacity="1"><polygon points="3,11 3,21 16,21 16,11 9.5,4" fill="#f2f2f2" stroke="#6e6e6e" stroke-width="0.95"/><polygon points="16,11 21,9 21,18.5 16,21" fill="#b5b5b5" stroke="#6e6e6e" stroke-width="0.82"/><polygon points="9.5,3 14.5,0.5 22.5,8.5 16.5,11.5" fill="#929292" stroke="#6e6e6e" stroke-width="0.82"/><path d="M1,12.5L9.5,3.2L17,11.5" fill="none" stroke="#6e6e6e" stroke-width="1.50"/><rect x="7.5" y="14" width="4" height="7" fill="#f2c94c" stroke="#c49a2a" stroke-width="0.8"/></g></svg>
<span class="t" style="left:114.40px;top:333.76px;font-size:18px;color:#333;letter-spacing:-0.421px;word-spacing:0.421px;">3D View</span>
<svg class="a" style="left:326px;top:338px;" width="16" height="10" viewBox="0 0 16 10"><polygon points="2,2 13.700,2 7.800,7.800" fill="#777"/></svg>
<span class="t" style="left:8.40px;top:401.76px;font-size:18px;color:#333;letter-spacing:-0.413px;word-spacing:0.413px;">3D View: 3D <span style="letter-spacing:-1.163px">JEMBATAN</span></span>
<svg class="a" style="left:223px;top:403px;" width="16" height="12" viewBox="0 0 16 12"><path d="M2.300,2.600L7.800,8.600L13.300,2.600" fill="none" stroke="#777" stroke-width="1.700"/></svg>
<svg class="a" style="left:246px;top:399px;" width="20" height="20" viewBox="0 0 20 20"><g fill="#f5f5f5" stroke="#555" stroke-width="1.200"><rect x="2.500" y="2.500" width="6" height="5.500"/><rect x="10.500" y="2.500" width="6" height="5.500"/><rect x="2.500" y="10" width="6" height="6.500"/><rect x="10.500" y="9.500" width="7.500" height="8"/></g><rect x="12" y="11" width="4.500" height="2" fill="#2b6fd0"/><path d="M12,15.500h4.500M14.500,14l1.500,1.500-1.500,1.500" fill="none" stroke="#555" stroke-width="0.900"/></svg>
<span class="t" style="left:269.80px;top:401.76px;font-size:18px;color:#333;letter-spacing:-0.460px;word-spacing:0.460px;">Edit Type</span>
<div class="a" style="left:3px;top:426px;width:240px;height:2px;background:#c9c9c9;"></div>
<div class="a" style="left:3px;top:432px;width:319px;height:1022px;background:#ffffff;"></div>
<svg class="a" style="left:0px;top:0px;" width="352" height="1460" viewBox="0 0 352 1460"><g stroke="#dedede" stroke-width="1" stroke-dasharray="1.500,1.500" fill="none"><path d="M3,491.5H322" /><path d="M3,521.5H322" /><path d="M3,551.5H322" /><path d="M3,581.5H322" /><path d="M3,611.5H322" /><path d="M3,641.5H322" /><path d="M3,671.5H322" /><path d="M3,701.5H322" /><path d="M3,731.5H322" /><path d="M3,761.5H322" /><path d="M3,791.5H322" /><path d="M3,821.5H322" /><path d="M3,851.5H322" /><path d="M3,911.5H322" /><path d="M3,941.5H322" /><path d="M3,971.5H322" /><path d="M3,1001.5H322" /><path d="M3,1031.5H322" /><path d="M3,1061.5H322" /><path d="M3,1091.5H322" /><path d="M3,1151.5H322" /><path d="M3,1181.5H322" /><path d="M3,1211.5H322" /><path d="M3,1241.5H322" /><path d="M3,1271.5H322" /><path d="M3,1301.5H322" /><path d="M3,1361.5H322" /><path d="M3,1391.5H322" /><path d="M3,1421.5H322" /><path d="M3,1451.5H322" /><path d="M153.500,462V1454M304.500,462V1454"/></g></svg>
<div class="a" style="left:3px;top:432px;width:319px;height:30px;background:#f2f2f2;"></div>
<span class="t" style="left:5.40px;top:440.36px;font-size:18px;color:#333;letter-spacing:-0.704px;">Graphics</span>
<svg class="a" style="left:308px;top:436px;" width="10" height="11" viewBox="0 0 10 11"><path d="M1.800,5L4.800,2L7.800,5M1.800,9.200L4.800,6.200L7.800,9.200" fill="none" stroke="#333" stroke-width="1.300"/></svg>
<span class="t" style="left:15.50px;top:468.16px;font-size:18px;color:#3b3b3b;letter-spacing:-0.965px;word-spacing:0.965px;">View Scale</span>
<div class="a" style="left:154px;top:463px;width:150px;height:29px;background:#fff;border:1.5px solid #111;box-sizing:border-box;"></div>
<span class="t" style="left:161.90px;top:468.16px;font-size:18px;color:#333;letter-spacing:-0.587px;word-spacing:0.587px;">1 : 200</span>
<span class="t" style="left:15.50px;top:498.16px;font-size:18px;color:#a3a3a3;letter-spacing:-0.859px;word-spacing:0.859px;">Scale Value</span>
<span class="t" style="left:156.50px;top:498.16px;font-size:18px;color:#a3a3a3;letter-spacing:-0.623px;">200</span>
<span class="t" style="left:124.40px;top:498.16px;font-size:18px;color:#a3a3a3;letter-spacing:-2.116px;">1:</span>
<span class="t" style="left:15.50px;top:528.16px;font-size:18px;color:#3b3b3b;letter-spacing:-0.626px;word-spacing:0.626px;">Detail Level</span>
<span class="t" style="left:156.50px;top:528.16px;font-size:18px;color:#3b3b3b;letter-spacing:-1.172px;">Fine</span>
<span class="t" style="left:15.50px;top:558.16px;font-size:18px;color:#3b3b3b;letter-spacing:-0.265px;word-spacing:0.265px;">Parts Visibility</span>
<span class="t" style="left:156.50px;top:558.16px;font-size:18px;color:#3b3b3b;letter-spacing:-0.323px;word-spacing:0.323px;">Show Both</span>
<span class="t" style="left:15.50px;top:588.16px;font-size:18px;color:#3b3b3b;letter-spacing:-0.095px;word-spacing:0.095px;">Detail Number</span>
<span class="t" style="left:156.50px;top:588.16px;font-size:18px;color:#3b3b3b;letter-spacing:0.000px;">1</span>
<span class="t" style="left:15.50px;top:618.16px;font-size:18px;color:#3b3b3b;letter-spacing:-0.264px;word-spacing:0.264px;">Rotation on Sh...</span>
<span class="t" style="left:156.50px;top:618.16px;font-size:18px;color:#3b3b3b;letter-spacing:-0.344px;">None</span>
<span class="t" style="left:15.50px;top:648.16px;font-size:18px;color:#3b3b3b;letter-spacing:-0.233px;">Visibility/Graphi...</span>
<div class="a" style="left:155px;top:644.5px;width:148px;height:26px;background:#f5f5f5;border:1px solid #adadad;box-sizing:border-box;"></div>
<span class="t" style="left:208.80px;top:649.16px;font-size:18px;color:#333;letter-spacing:-0.939px;">Edit...</span>
<span class="t" style="left:15.50px;top:678.16px;font-size:18px;color:#3b3b3b;letter-spacing:-0.457px;word-spacing:0.457px;">Graphic Display...</span>
<div class="a" style="left:155px;top:674.5px;width:148px;height:26px;background:#f5f5f5;border:1px solid #adadad;box-sizing:border-box;"></div>
<span class="t" style="left:208.80px;top:679.16px;font-size:18px;color:#333;letter-spacing:-0.939px;">Edit...</span>
<span class="t" style="left:15.50px;top:708.16px;font-size:18px;color:#3b3b3b;letter-spacing:-0.370px;">Discipline</span>
<span class="t" style="left:156.50px;top:708.16px;font-size:18px;color:#3b3b3b;letter-spacing:-0.303px;">Structural</span>
<span class="t" style="left:15.50px;top:738.16px;font-size:18px;color:#3b3b3b;letter-spacing:-0.485px;word-spacing:0.485px;">Show Hidden Li...</span>
<span class="t" style="left:156.50px;top:738.16px;font-size:18px;color:#3b3b3b;letter-spacing:-0.432px;word-spacing:0.432px;">By Discipline</span>
<span class="t" style="left:15.50px;top:768.16px;font-size:18px;color:#3b3b3b;letter-spacing:-0.305px;word-spacing:0.305px;">Default Analysi...</span>
<span class="t" style="left:156.50px;top:768.16px;font-size:18px;color:#3b3b3b;letter-spacing:-0.344px;">None</span>
<span class="t" style="left:15.50px;top:798.16px;font-size:18px;color:#3b3b3b;letter-spacing:-0.581px;word-spacing:0.581px;">Show Grids</span>
<div class="a" style="left:155px;top:794.5px;width:148px;height:26px;background:#f5f5f5;border:1px solid #adadad;box-sizing:border-box;"></div>
<span class="t" style="left:208.80px;top:799.16px;font-size:18px;color:#333;letter-spacing:-0.939px;">Edit...</span>
<span class="t" style="left:15.50px;top:828.16px;font-size:18px;color:#3b3b3b;letter-spacing:-0.844px;word-spacing:0.844px;">Sun Path</span>
<div class="a" style="left:158px;top:827px;width:18px;height:18px;background:#fff;border:1.7px solid #626262;box-sizing:border-box;border-radius:1.5px;"></div>
<div class="a" style="left:3px;top:852px;width:319px;height:30px;background:#f2f2f2;"></div>
<span class="t" style="left:5.40px;top:860.36px;font-size:18px;color:#333;letter-spacing:-0.805px;">Extents</span>
<svg class="a" style="left:308px;top:856px;" width="10" height="11" viewBox="0 0 10 11"><path d="M1.800,5L4.800,2L7.800,5M1.800,9.200L4.800,6.200L7.800,9.200" fill="none" stroke="#333" stroke-width="1.300"/></svg>
<span class="t" style="left:15.50px;top:888.16px;font-size:18px;color:#3b3b3b;letter-spacing:-0.346px;word-spacing:0.346px;">Crop View</span>
<div class="a" style="left:158px;top:887px;width:18px;height:18px;background:#fff;border:1.7px solid #626262;box-sizing:border-box;border-radius:1.5px;"></div>
<span class="t" style="left:15.50px;top:918.16px;font-size:18px;color:#3b3b3b;letter-spacing:-0.389px;word-spacing:0.389px;">Crop Region Vi...</span>
<div class="a" style="left:158px;top:917px;width:18px;height:18px;background:#fff;border:1.7px solid #626262;box-sizing:border-box;border-radius:1.5px;"></div>
<span class="t" style="left:15.50px;top:948.16px;font-size:18px;color:#3b3b3b;letter-spacing:0.139px;word-spacing:-0.139px;">Annotation Crop</span>
<div class="a" style="left:158px;top:947px;width:18px;height:18px;background:#fff;border:1.7px solid #626262;box-sizing:border-box;border-radius:1.5px;"></div>
<span class="t" style="left:15.50px;top:978.16px;font-size:18px;color:#3b3b3b;letter-spacing:-0.404px;word-spacing:0.404px;">Far Clip Active</span>
<div class="a" style="left:158px;top:977px;width:18px;height:18px;background:#fff;border:1.7px solid #626262;box-sizing:border-box;border-radius:1.5px;"></div>
<span class="t" style="left:15.50px;top:1008.16px;font-size:18px;color:#a3a3a3;letter-spacing:-0.275px;word-spacing:0.275px;">Far Clip Offset</span>
<span class="t" style="left:156.50px;top:1008.16px;font-size:18px;color:#a3a3a3;letter-spacing:-0.240px;">304800.0</span>
<span class="t" style="left:15.50px;top:1038.16px;font-size:18px;color:#3b3b3b;letter-spacing:-0.666px;word-spacing:0.666px;">Scope Box</span>
<span class="t" style="left:156.50px;top:1038.16px;font-size:18px;color:#3b3b3b;letter-spacing:-0.344px;">None</span>
<span class="t" style="left:15.50px;top:1068.16px;font-size:18px;color:#3b3b3b;letter-spacing:-0.518px;word-spacing:0.518px;">Section Box</span>
<div class="a" style="left:158px;top:1067px;width:18px;height:18px;background:#fff;border:1.7px solid #626262;box-sizing:border-box;border-radius:1.5px;"></div>
<div class="a" style="left:3px;top:1092px;width:319px;height:30px;background:#f2f2f2;"></div>
<span class="t" style="left:5.40px;top:1100.36px;font-size:18px;color:#333;letter-spacing:-1.006px;">Camera</span>
<svg class="a" style="left:308px;top:1096px;" width="10" height="11" viewBox="0 0 10 11"><path d="M1.800,5L4.800,2L7.800,5M1.800,9.200L4.800,6.200L7.800,9.200" fill="none" stroke="#333" stroke-width="1.300"/></svg>
<span class="t" style="left:15.50px;top:1128.16px;font-size:18px;color:#3b3b3b;letter-spacing:-0.411px;word-spacing:0.411px;">Rendering Setti...</span>
<div class="a" style="left:155px;top:1124.5px;width:148px;height:26px;background:#f5f5f5;border:1px solid #adadad;box-sizing:border-box;"></div>
<span class="t" style="left:208.80px;top:1129.16px;font-size:18px;color:#333;letter-spacing:-0.939px;">Edit...</span>
<span class="t" style="left:15.50px;top:1158.16px;font-size:18px;color:#a3a3a3;letter-spacing:-0.336px;word-spacing:0.336px;">Locked Orientat...</span>
<div class="a" style="left:158px;top:1157px;width:18px;height:18px;background:#cfcfcf;border-radius:1.5px;"></div>
<svg class="a" style="left:158px;top:1157px;" width="18" height="18" viewBox="0 0 18 18"><path d="M4,9.500L7.500,13L14,5.500" fill="none" stroke="#fff" stroke-width="2.200"/></svg>
<span class="t" style="left:15.50px;top:1188.16px;font-size:18px;color:#a3a3a3;letter-spacing:0.056px;word-spacing:-0.056px;">Projection Mode</span>
<span class="t" style="left:156.50px;top:1188.16px;font-size:18px;color:#a3a3a3;letter-spacing:0.158px;">Orthographic</span>
<span class="t" style="left:15.50px;top:1218.16px;font-size:18px;color:#3b3b3b;letter-spacing:-0.707px;word-spacing:0.707px;">Eye Elevation</span>
<span class="t" style="left:156.50px;top:1218.16px;font-size:18px;color:#3b3b3b;letter-spacing:-0.313px;">10628.8</span>
<span class="t" style="left:15.50px;top:1248.16px;font-size:18px;color:#3b3b3b;letter-spacing:-0.277px;word-spacing:0.277px;">Target Elevation</span>
<span class="t" style="left:156.50px;top:1248.16px;font-size:18px;color:#3b3b3b;letter-spacing:-0.492px;">2616.1</span>
<span class="t" style="left:15.50px;top:1278.16px;font-size:18px;color:#a3a3a3;letter-spacing:-0.382px;word-spacing:0.382px;">Camera Position</span>
<span class="t" style="left:156.50px;top:1278.16px;font-size:18px;color:#a3a3a3;letter-spacing:0.067px;">Adjusting</span>
<div class="a" style="left:3px;top:1302px;width:319px;height:30px;background:#f2f2f2;"></div>
<span class="t" style="left:5.40px;top:1310.36px;font-size:18px;color:#333;letter-spacing:0.003px;word-spacing:-0.003px;">Identity Data</span>
<svg class="a" style="left:308px;top:1306px;" width="10" height="11" viewBox="0 0 10 11"><path d="M1.800,5L4.800,2L7.800,5M1.800,9.200L4.800,6.200L7.800,9.200" fill="none" stroke="#333" stroke-width="1.300"/></svg>
<span class="t" style="left:15.50px;top:1338.16px;font-size:18px;color:#3b3b3b;letter-spacing:-0.219px;word-spacing:0.219px;">View Template</span>
<div class="a" style="left:155px;top:1334.5px;width:148px;height:26px;background:#f5f5f5;border:1px solid #adadad;box-sizing:border-box;"></div>
<span class="t" style="left:196.65px;top:1339.16px;font-size:18px;color:#333;letter-spacing:0.128px;">&lt;None&gt;</span>
<span class="t" style="left:15.50px;top:1368.16px;font-size:18px;color:#3b3b3b;letter-spacing:-0.460px;word-spacing:0.460px;">View Name</span>
<span class="t" style="left:156.50px;top:1368.16px;font-size:18px;color:#3b3b3b;letter-spacing:-0.268px;word-spacing:0.268px;">3D <span style="letter-spacing:-1.018px">JEMBATAN</span></span>
<span class="t" style="left:15.50px;top:1398.16px;font-size:18px;color:#a3a3a3;letter-spacing:-0.298px;">Dependency</span>
<span class="t" style="left:156.50px;top:1398.16px;font-size:18px;color:#a3a3a3;letter-spacing:0.039px;">Independent</span>
<span class="t" style="left:15.50px;top:1428.16px;font-size:18px;color:#3b3b3b;letter-spacing:-0.337px;word-spacing:0.337px;">Title on Sheet</span>
<div class="a" style="left:323px;top:432px;width:25px;height:1022px;background:#ebebeb;"></div>
<div class="a" style="left:323px;top:432px;width:25px;height:27px;background:#e6e6e6;border-bottom:1px solid #d9d9d9;box-sizing:border-box;"></div>
<svg class="a" style="left:326px;top:438px;" width="20" height="14" viewBox="0 0 20 14"><path d="M3.500,10.500L10,4L16.500,10.500" fill="none" stroke="#7c7c7c" stroke-width="1.800"/></svg>
<div class="a" style="left:332px;top:462px;width:8px;height:815px;background:#c9c9c9;border-radius:4px;"></div>
<div class="a" style="left:323px;top:1429px;width:25px;height:1px;background:#d9d9d9;"></div>
<svg class="a" style="left:326px;top:1435px;" width="20" height="14" viewBox="0 0 20 14"><path d="M3.500,4L10,10.500L16.500,4" fill="none" stroke="#7c7c7c" stroke-width="1.800"/></svg>
<div class="a" style="left:0px;top:1454px;width:352px;height:36px;background:#f5f5f5;"></div>
<div class="a" style="left:5px;top:1456.5px;width:31px;height:31px;background:#8cc9ec;border:1px solid #79bbe3;box-sizing:border-box;border-radius:3px;"></div>
<svg class="a" style="left:5px;top:1456px;" width="32" height="32" viewBox="0 0 32 32"><path d="M6,9.500h11M6,14.500h11M6,19.500h11M6,24.500h11" stroke="#3a3a3a" stroke-width="1.600"/><path d="M22.500,7.500V26" stroke="#3a3a3a" stroke-width="1.500"/><polygon points="22.500,5 25.500,10 19.500,10" fill="#3a3a3a"/><polygon points="22.500,28.500 25.500,23.500 19.500,23.500" fill="#3a3a3a"/></svg>
<svg class="a" style="left:41px;top:1456px;" width="34" height="32" viewBox="0 0 34 32"><text x="10" y="14" font-family="Liberation Sans, sans-serif" font-size="12.500" fill="#2b8fe6" text-anchor="middle">A</text><text x="10" y="27" font-family="Liberation Sans, sans-serif" font-size="12.500" fill="#555" text-anchor="middle">Z</text><path d="M22.500,5V25" stroke="#444" stroke-width="1.600"/><polygon points="22.500,28 26,22 19,22" fill="#444"/></svg>
<svg class="a" style="left:77px;top:1456px;" width="34" height="32" viewBox="0 0 34 32"><text x="10" y="14" font-family="Liberation Sans, sans-serif" font-size="12.500" fill="#555" text-anchor="middle">Z</text><text x="10" y="27" font-family="Liberation Sans, sans-serif" font-size="12.500" fill="#2b8fe6" text-anchor="middle">A</text><path d="M22.500,5V25" stroke="#444" stroke-width="1.600"/><polygon points="22.500,28 26,22 19,22" fill="#444"/></svg>
<div class="a" style="left:238px;top:1457px;width:107.5px;height:27.5px;background:#f5f5f5;border:1px solid #cccccc;box-sizing:border-box;border-radius:3px;"></div>
<span class="t" style="left:269.00px;top:1465.16px;font-size:18px;color:#a6a6a6;letter-spacing:0.492px;">Apply</span>
<div class="a" style="left:355px;top:261px;width:1601px;height:30px;background:#cbcbcb;"></div>
<div class="a" style="left:846px;top:261px;width:199px;height:30px;background:#ffffff;"></div>
<svg class="a" style="left:360px;top:264px;" width="26" height="24" viewBox="0 0 26 24"><g transform="translate(1,1) scale(1.0)" opacity="0.55"><polygon points="3,11 3,21 16,21 16,11 9.5,4" fill="#f2f2f2" stroke="#6e6e6e" stroke-width="1.40"/><polygon points="16,11 21,9 21,18.5 16,21" fill="#b5b5b5" stroke="#6e6e6e" stroke-width="1.20"/><polygon points="9.5,3 14.5,0.5 22.5,8.5 16.5,11.5" fill="#929292" stroke="#6e6e6e" stroke-width="1.20"/><path d="M1,12.5L9.5,3.2L17,11.5" fill="none" stroke="#6e6e6e" stroke-width="2.20"/><rect x="7.5" y="14" width="4" height="7" fill="#f2c94c" stroke="#c49a2a" stroke-width="0.8"/></g></svg>
<span class="t" style="left:397.00px;top:267.96px;font-size:18px;color:#444;letter-spacing:-0.582px;">{3D}</span>
<svg class="a" style="left:553px;top:266px;" width="27" height="20" viewBox="0 0 27 20"><path d="M1,1.500H17.500L24.500,7V18.500H1Z" fill="#dcdcdc" stroke="#9c9c9c" stroke-width="1.500"/><path d="M17.500,1.500V7H24.500" fill="none" stroke="#9c9c9c" stroke-width="1.300"/></svg>
<span class="t" style="left:588.60px;top:267.96px;font-size:18px;color:#444;letter-spacing:-0.370px;word-spacing:0.745px;">S-008 - <span style="letter-spacing:-1.120px">DETAIL PELAT INJAK</span></span>
<svg class="a" style="left:852px;top:264px;" width="26" height="24" viewBox="0 0 26 24"><g transform="translate(1,1) scale(1.0)" opacity="1"><polygon points="3,11 3,21 16,21 16,11 9.5,4" fill="#f2f2f2" stroke="#6e6e6e" stroke-width="1.40"/><polygon points="16,11 21,9 21,18.5 16,21" fill="#b5b5b5" stroke="#6e6e6e" stroke-width="1.20"/><polygon points="9.5,3 14.5,0.5 22.5,8.5 16.5,11.5" fill="#929292" stroke="#6e6e6e" stroke-width="1.20"/><path d="M1,12.5L9.5,3.2L17,11.5" fill="none" stroke="#6e6e6e" stroke-width="2.20"/><rect x="7.5" y="14" width="4" height="7" fill="#f2c94c" stroke="#c49a2a" stroke-width="0.8"/></g></svg>
<span class="t" style="left:888.00px;top:267.96px;font-size:18px;color:#222;letter-spacing:0.245px;word-spacing:-0.245px;font-weight:700;">3D <span style="letter-spacing:-0.505px">JEMBATAN</span></span>
<svg class="a" style="left:1020px;top:267px;" width="19" height="19" viewBox="0 0 19 19"><path d="M2.500,2.500L15.500,15.500M15.500,2.500L2.500,15.500" stroke="#555" stroke-width="2.200"/></svg>
<svg class="a" style="left:1933px;top:269px;" width="16" height="15" viewBox="0 0 16 15"><path d="M2,3H14" stroke="#777" stroke-width="1.600"/><polygon points="2,6.500 14,6.500 8,13" fill="#777"/></svg>
<div class="a" style="left:355px;top:291px;width:1601px;height:1171px;background:#ffffff;"></div>
<svg class="a" style="left:355px;top:291px;" width="1572" height="1171" viewBox="355 291 1572 1171"><g shape-rendering="crispEdges"><defs><linearGradient id="pg" x1="0" x2="1" y1="0" y2="0"><stop offset="0" stop-color="#85877a"/><stop offset="0.12" stop-color="#aeb0a1"/><stop offset="0.28" stop-color="#e0e1d3"/><stop offset="0.46" stop-color="#fefef0"/><stop offset="0.72" stop-color="#ffffff"/><stop offset="1" stop-color="#ffffff"/></linearGradient><linearGradient id="colg" x1="0" x2="1" y1="0" y2="0"><stop offset="0" stop-color="#d2d2c6"/><stop offset="0.35" stop-color="#bebeae"/><stop offset="0.75" stop-color="#adad9b"/><stop offset="1" stop-color="#b3b3a1"/></linearGradient><linearGradient id="colr" x1="0" x2="1" y1="0" y2="0"><stop offset="0" stop-color="#d6d8cc"/><stop offset="0.55" stop-color="#c8cabd"/><stop offset="1" stop-color="#b6b8a8"/></linearGradient><linearGradient id="web" x1="0" x2="0" y1="0" y2="1"><stop offset="0" stop-color="#b4b6a6"/><stop offset="1" stop-color="#d2d4ca"/></linearGradient><linearGradient id="glow" x1="0" x2="1" y1="0" y2="0"><stop offset="0" stop-color="#fdf9e2"/><stop offset="1" stop-color="#ffffff"/></linearGradient><pattern id="brick" width="6" height="3" patternUnits="userSpaceOnUse" patternTransform="rotate(-18)"><rect width="6" height="3" fill="#6f4f3e"/><rect width="6" height="1" fill="#6b4c3b"/></pattern></defs><path d="M755.5,748.2V960.2A9.8,3.400 0 0 0 775.0,960.2V748.2Z" fill="url(#pg)" stroke="#1c1c1c" stroke-width="1"/><path d="M809.1,754.0V966.0A9.8,3.400 0 0 0 828.7,966.0V754.0Z" fill="url(#pg)" stroke="#1c1c1c" stroke-width="1"/><path d="M721.9,759.5V971.5A9.8,3.400 0 0 0 741.5,971.5V759.5Z" fill="url(#pg)" stroke="#1c1c1c" stroke-width="1"/><path d="M862.8,759.9V971.9A9.8,3.400 0 0 0 882.3,971.9V759.9Z" fill="url(#pg)" stroke="#1c1c1c" stroke-width="1"/><path d="M775.5,765.3V977.3A9.8,3.400 0 0 0 795.1,977.3V765.3Z" fill="url(#pg)" stroke="#1c1c1c" stroke-width="1"/><path d="M916.4,765.7V977.7A9.8,3.400 0 0 0 936.0,977.7V765.7Z" fill="url(#pg)" stroke="#1c1c1c" stroke-width="1"/><path d="M688.4,770.8V982.8A9.8,3.400 0 0 0 707.9,982.8V770.8Z" fill="url(#pg)" stroke="#1c1c1c" stroke-width="1"/><path d="M829.2,771.2V983.2A9.8,3.400 0 0 0 848.8,983.2V771.2Z" fill="url(#pg)" stroke="#1c1c1c" stroke-width="1"/><path d="M742.0,776.6V988.6A9.8,3.400 0 0 0 761.6,988.6V776.6Z" fill="url(#pg)" stroke="#1c1c1c" stroke-width="1"/><path d="M882.8,777.0V989.0A9.8,3.400 0 0 0 902.4,989.0V777.0Z" fill="url(#pg)" stroke="#1c1c1c" stroke-width="1"/><path d="M654.8,782.1V994.1A9.8,3.400 0 0 0 674.4,994.1V782.1Z" fill="url(#pg)" stroke="#1c1c1c" stroke-width="1"/><path d="M795.6,782.5V994.5A9.8,3.400 0 0 0 815.2,994.5V782.5Z" fill="url(#pg)" stroke="#1c1c1c" stroke-width="1"/><path d="M708.5,787.9V999.9A9.8,3.400 0 0 0 728.0,999.9V787.9Z" fill="url(#pg)" stroke="#1c1c1c" stroke-width="1"/><path d="M849.3,788.3V1000.3A9.8,3.400 0 0 0 868.9,1000.3V788.3Z" fill="url(#pg)" stroke="#1c1c1c" stroke-width="1"/><path d="M621.2,793.4V1005.4A9.8,3.400 0 0 0 640.8,1005.4V793.4Z" fill="url(#pg)" stroke="#1c1c1c" stroke-width="1"/><path d="M762.1,793.8V1005.8A9.8,3.400 0 0 0 781.7,1005.8V793.8Z" fill="url(#pg)" stroke="#1c1c1c" stroke-width="1"/><path d="M674.9,799.2V1011.2A9.8,3.400 0 0 0 694.5,1011.2V799.2Z" fill="url(#pg)" stroke="#1c1c1c" stroke-width="1"/><path d="M815.8,799.6V1011.6A9.8,3.400 0 0 0 835.3,1011.6V799.6Z" fill="url(#pg)" stroke="#1c1c1c" stroke-width="1"/><path d="M587.7,804.7V1016.7A9.8,3.400 0 0 0 607.3,1016.7V804.7Z" fill="url(#pg)" stroke="#1c1c1c" stroke-width="1"/><path d="M728.5,805.1V1017.1A9.8,3.400 0 0 0 748.1,1017.1V805.1Z" fill="url(#pg)" stroke="#1c1c1c" stroke-width="1"/><path d="M641.4,810.5V1022.5A9.8,3.400 0 0 0 660.9,1022.5V810.5Z" fill="url(#pg)" stroke="#1c1c1c" stroke-width="1"/><path d="M782.2,810.9V1022.9A9.8,3.400 0 0 0 801.8,1022.9V810.9Z" fill="url(#pg)" stroke="#1c1c1c" stroke-width="1"/><path d="M554.1,816.0V1028.0A9.8,3.400 0 0 0 573.7,1028.0V816.0Z" fill="url(#pg)" stroke="#1c1c1c" stroke-width="1"/><path d="M695.0,816.3V1028.3A9.8,3.400 0 0 0 714.6,1028.3V816.3Z" fill="url(#pg)" stroke="#1c1c1c" stroke-width="1"/><path d="M607.8,821.8V1033.8A9.8,3.400 0 0 0 627.4,1033.8V821.8Z" fill="url(#pg)" stroke="#1c1c1c" stroke-width="1"/><path d="M748.6,822.2V1034.2A9.8,3.400 0 0 0 768.2,1034.2V822.2Z" fill="url(#pg)" stroke="#1c1c1c" stroke-width="1"/><path d="M520.6,827.2V1039.2A9.8,3.400 0 0 0 540.2,1039.2V827.2Z" fill="url(#pg)" stroke="#1c1c1c" stroke-width="1"/><path d="M661.5,827.7V1039.7A9.8,3.400 0 0 0 681.0,1039.7V827.7Z" fill="url(#pg)" stroke="#1c1c1c" stroke-width="1"/><path d="M574.2,833.1V1045.1A9.8,3.400 0 0 0 593.8,1045.1V833.1Z" fill="url(#pg)" stroke="#1c1c1c" stroke-width="1"/><path d="M715.1,833.5V1045.5A9.8,3.400 0 0 0 734.7,1045.5V833.5Z" fill="url(#pg)" stroke="#1c1c1c" stroke-width="1"/><path d="M487.0,838.5V1050.5A9.8,3.400 0 0 0 506.6,1050.5V838.5Z" fill="url(#pg)" stroke="#1c1c1c" stroke-width="1"/><path d="M627.9,839.0V1051.0A9.8,3.400 0 0 0 647.5,1051.0V839.0Z" fill="url(#pg)" stroke="#1c1c1c" stroke-width="1"/><path d="M540.7,844.4V1056.4A9.8,3.400 0 0 0 560.3,1056.4V844.4Z" fill="url(#pg)" stroke="#1c1c1c" stroke-width="1"/><path d="M681.5,844.8V1056.8A9.8,3.400 0 0 0 701.1,1056.8V844.8Z" fill="url(#pg)" stroke="#1c1c1c" stroke-width="1"/><path d="M594.4,850.2V1062.2A9.8,3.400 0 0 0 613.9,1062.2V850.2Z" fill="url(#pg)" stroke="#1c1c1c" stroke-width="1"/><path d="M648.0,856.1V1068.1A9.8,3.400 0 0 0 667.6,1068.1V856.1Z" fill="url(#pg)" stroke="#1c1c1c" stroke-width="1"/><polygon points="470.8,814.7 659.9,835.2 953.7,736.6 764.6,716.1" fill="#ffffff" stroke="#1c1c1c" stroke-width="1" stroke-linejoin="round" /><polygon points="470.8,814.7 659.9,835.2 659.9,875.5 470.8,854.5" fill="#cdcfc4" stroke="#1c1c1c" stroke-width="1" stroke-linejoin="round" /><polygon points="659.9,835.2 953.7,736.6 953.7,776.9 659.9,875.5" fill="#fdfdf7" stroke="#1c1c1c" stroke-width="1" stroke-linejoin="round" /><polygon points="627.0,640.0 871.5,683.0 871.5,738.6 627.0,820.8" fill="#ffffff" stroke="#1c1c1c" stroke-width="1" stroke-linejoin="round" /><polygon points="593.1,612.1 611.0,614.2 611.0,640.6 627.9,642.2 627.9,820.8 594.1,818.6" fill="url(#colg)" stroke="#1c1c1c" stroke-width="1" stroke-linejoin="round" /><polygon points="628.4,643.0 642.0,640.5 642.0,780.0 628.4,820.0" fill="url(#glow)" stroke-linejoin="round" /><polygon points="460.0,596.0 594.1,612.2 594.1,818.6 495.5,806.4 460.4,770.7" fill="#676963" stroke="#1c1c1c" stroke-width="1" stroke-linejoin="round" /><polygon points="588.3,621.4 593.6,621.4 593.6,633.5 590.5,631.5 588.3,629.0" fill="#c5c5b7" stroke="#1c1c1c" stroke-width="1" stroke-linejoin="round" /><path d="M1616.7,844.1V1056.1A9.8,3.400 0 0 0 1636.3,1056.1V844.1Z" fill="url(#pg)" stroke="#1c1c1c" stroke-width="1"/><path d="M1670.4,850.0V1062.0A9.8,3.400 0 0 0 1690.0,1062.0V850.0Z" fill="url(#pg)" stroke="#1c1c1c" stroke-width="1"/><path d="M1583.2,855.5V1067.5A9.8,3.400 0 0 0 1602.8,1067.5V855.5Z" fill="url(#pg)" stroke="#1c1c1c" stroke-width="1"/><path d="M1724.0,855.8V1067.8A9.8,3.400 0 0 0 1743.6,1067.8V855.8Z" fill="url(#pg)" stroke="#1c1c1c" stroke-width="1"/><path d="M1636.8,861.3V1073.3A9.8,3.400 0 0 0 1656.4,1073.3V861.3Z" fill="url(#pg)" stroke="#1c1c1c" stroke-width="1"/><path d="M1777.7,861.7V1073.7A9.8,3.400 0 0 0 1797.3,1073.7V861.7Z" fill="url(#pg)" stroke="#1c1c1c" stroke-width="1"/><path d="M1549.6,866.8V1078.8A9.8,3.400 0 0 0 1569.2,1078.8V866.8Z" fill="url(#pg)" stroke="#1c1c1c" stroke-width="1"/><path d="M1690.5,867.2V1079.2A9.8,3.400 0 0 0 1710.1,1079.2V867.2Z" fill="url(#pg)" stroke="#1c1c1c" stroke-width="1"/><path d="M1603.3,872.6V1084.6A9.8,3.400 0 0 0 1622.9,1084.6V872.6Z" fill="url(#pg)" stroke="#1c1c1c" stroke-width="1"/><path d="M1744.1,873.0V1085.0A9.8,3.400 0 0 0 1763.7,1085.0V873.0Z" fill="url(#pg)" stroke="#1c1c1c" stroke-width="1"/><path d="M1516.1,878.0V1090.0A9.8,3.400 0 0 0 1535.7,1090.0V878.0Z" fill="url(#pg)" stroke="#1c1c1c" stroke-width="1"/><path d="M1656.9,878.5V1090.5A9.8,3.400 0 0 0 1676.5,1090.5V878.5Z" fill="url(#pg)" stroke="#1c1c1c" stroke-width="1"/><path d="M1569.8,883.9V1095.9A9.8,3.400 0 0 0 1589.3,1095.9V883.9Z" fill="url(#pg)" stroke="#1c1c1c" stroke-width="1"/><path d="M1710.6,884.3V1096.3A9.8,3.400 0 0 0 1730.2,1096.3V884.3Z" fill="url(#pg)" stroke="#1c1c1c" stroke-width="1"/><path d="M1482.5,889.3V1101.3A9.8,3.400 0 0 0 1502.1,1101.3V889.3Z" fill="url(#pg)" stroke="#1c1c1c" stroke-width="1"/><path d="M1623.4,889.8V1101.8A9.8,3.400 0 0 0 1643.0,1101.8V889.8Z" fill="url(#pg)" stroke="#1c1c1c" stroke-width="1"/><path d="M1536.2,895.2V1107.2A9.8,3.400 0 0 0 1555.8,1107.2V895.2Z" fill="url(#pg)" stroke="#1c1c1c" stroke-width="1"/><path d="M1677.0,895.6V1107.6A9.8,3.400 0 0 0 1696.6,1107.6V895.6Z" fill="url(#pg)" stroke="#1c1c1c" stroke-width="1"/><path d="M1449.0,900.6V1112.6A9.8,3.400 0 0 0 1468.6,1112.6V900.6Z" fill="url(#pg)" stroke="#1c1c1c" stroke-width="1"/><path d="M1589.8,901.0V1113.0A9.8,3.400 0 0 0 1609.4,1113.0V901.0Z" fill="url(#pg)" stroke="#1c1c1c" stroke-width="1"/><path d="M1502.7,906.5V1118.5A9.8,3.400 0 0 0 1522.2,1118.5V906.5Z" fill="url(#pg)" stroke="#1c1c1c" stroke-width="1"/><path d="M1643.5,906.9V1118.9A9.8,3.400 0 0 0 1663.1,1118.9V906.9Z" fill="url(#pg)" stroke="#1c1c1c" stroke-width="1"/><path d="M1415.4,912.0V1124.0A9.8,3.400 0 0 0 1435.0,1124.0V912.0Z" fill="url(#pg)" stroke="#1c1c1c" stroke-width="1"/><path d="M1556.3,912.3V1124.3A9.8,3.400 0 0 0 1575.9,1124.3V912.3Z" fill="url(#pg)" stroke="#1c1c1c" stroke-width="1"/><path d="M1469.1,917.8V1129.8A9.8,3.400 0 0 0 1488.7,1129.8V917.8Z" fill="url(#pg)" stroke="#1c1c1c" stroke-width="1"/><path d="M1610.0,918.2V1130.2A9.8,3.400 0 0 0 1629.5,1130.2V918.2Z" fill="url(#pg)" stroke="#1c1c1c" stroke-width="1"/><path d="M1381.9,923.2V1135.2A9.8,3.400 0 0 0 1401.5,1135.2V923.2Z" fill="url(#pg)" stroke="#1c1c1c" stroke-width="1"/><path d="M1522.7,923.7V1135.7A9.8,3.400 0 0 0 1542.3,1135.7V923.7Z" fill="url(#pg)" stroke="#1c1c1c" stroke-width="1"/><path d="M1435.5,929.1V1141.1A9.8,3.400 0 0 0 1455.1,1141.1V929.1Z" fill="url(#pg)" stroke="#1c1c1c" stroke-width="1"/><path d="M1576.4,929.5V1141.5A9.8,3.400 0 0 0 1596.0,1141.5V929.5Z" fill="url(#pg)" stroke="#1c1c1c" stroke-width="1"/><path d="M1348.3,934.5V1146.5A9.8,3.400 0 0 0 1367.9,1146.5V934.5Z" fill="url(#pg)" stroke="#1c1c1c" stroke-width="1"/><path d="M1489.2,935.0V1147.0A9.8,3.400 0 0 0 1508.8,1147.0V935.0Z" fill="url(#pg)" stroke="#1c1c1c" stroke-width="1"/><path d="M1402.0,940.4V1152.4A9.8,3.400 0 0 0 1421.6,1152.4V940.4Z" fill="url(#pg)" stroke="#1c1c1c" stroke-width="1"/><path d="M1542.8,940.8V1152.8A9.8,3.400 0 0 0 1562.4,1152.8V940.8Z" fill="url(#pg)" stroke="#1c1c1c" stroke-width="1"/><path d="M1455.6,946.2V1158.2A9.8,3.400 0 0 0 1475.2,1158.2V946.2Z" fill="url(#pg)" stroke="#1c1c1c" stroke-width="1"/><path d="M1509.3,952.1V1164.1A9.8,3.400 0 0 0 1528.9,1164.1V952.1Z" fill="url(#pg)" stroke="#1c1c1c" stroke-width="1"/><polygon points="1332.1,910.0 1520.6,930.3 1814.3,831.1 1625.8,810.8" fill="#ffffff" stroke="#1c1c1c" stroke-width="1" stroke-linejoin="round" /><polygon points="1332.1,910.0 1520.6,930.3 1520.6,970.6 1332.1,949.8" fill="#cdcfc4" stroke="#1c1c1c" stroke-width="1" stroke-linejoin="round" /><polygon points="1520.6,930.3 1814.3,831.1 1814.3,871.4 1520.6,970.6" fill="#fdfdf7" stroke="#1c1c1c" stroke-width="1" stroke-linejoin="round" /><polygon points="1547.7,921.7 1584.4,892.8 1824.6,812.6 1806.5,829.8" fill="#2e2a27" stroke="#1c1c1c" stroke-width="1" stroke-linejoin="round" /><polygon points="1447.3,706.6 1580.1,720.0 1580.1,893.7 1547.7,921.7 1447.3,910.9" fill="#676963" stroke="#1c1c1c" stroke-width="1" stroke-linejoin="round" /><polygon points="1580.1,719.5 1586.2,718.5 1586.2,891.5 1580.1,893.7" fill="#cacabe" stroke="#1c1c1c" stroke-width="1" stroke-linejoin="round" /><polygon points="1586.2,737.7 1778.5,672.5 1778.5,723.4 1819.3,709.9 1819.3,814.4 1586.2,892.2" fill="url(#brick)" stroke="#1c1c1c" stroke-width="1" stroke-linejoin="round" /><polygon points="1819.3,709.5 1824.6,708.2 1824.6,812.6 1819.3,814.4" fill="#d2d2c6" stroke="#1c1c1c" stroke-width="1" stroke-linejoin="round" /><polygon points="621.5,615.4 679.2,622.2 736.9,628.9 794.5,635.6 852.2,642.2 909.9,648.7 967.6,655.2 1025.2,661.6 1082.9,668.0 1140.6,674.2 1198.3,680.5 1256.0,686.6 1313.6,692.7 1371.3,698.7 1429.0,704.7 1429.0,710.3 1371.3,704.3 1313.6,698.3 1256.0,692.2 1198.3,686.1 1140.6,679.8 1082.9,673.6 1025.2,667.2 967.6,660.8 909.9,654.3 852.2,647.8 794.5,641.2 736.9,634.5 679.2,627.8 621.5,621.0" fill="#a9ab99" stroke-linejoin="round" /><polygon points="621.5,620.4 679.2,627.2 736.9,633.9 794.5,640.6 852.2,647.2 909.9,653.7 967.6,660.2 1025.2,666.6 1082.9,673.0 1140.6,679.2 1198.3,685.5 1256.0,691.6 1313.6,697.7 1371.3,703.7 1429.0,709.7 1429.0,715.3 1371.3,709.3 1313.6,703.3 1256.0,697.2 1198.3,691.1 1140.6,684.8 1082.9,678.6 1025.2,672.2 967.6,665.8 909.9,659.3 852.2,652.8 794.5,646.2 736.9,639.5 679.2,632.8 621.5,626.0" fill="#b3b5a5" stroke-linejoin="round" /><polygon points="621.5,625.4 679.2,632.2 736.9,638.9 794.5,645.6 852.2,652.2 909.9,658.7 967.6,665.2 1025.2,671.6 1082.9,678.0 1140.6,684.2 1198.3,690.5 1256.0,696.6 1313.6,702.7 1371.3,708.7 1429.0,714.7 1429.0,720.3 1371.3,714.3 1313.6,708.3 1256.0,702.2 1198.3,696.1 1140.6,689.8 1082.9,683.6 1025.2,677.2 967.6,670.8 909.9,664.3 852.2,657.8 794.5,651.2 736.9,644.5 679.2,637.8 621.5,631.0" fill="#bdbfb1" stroke-linejoin="round" /><polygon points="621.5,630.4 679.2,637.2 736.9,643.9 794.5,650.6 852.2,657.2 909.9,663.7 967.6,670.2 1025.2,676.6 1082.9,683.0 1140.6,689.2 1198.3,695.5 1256.0,701.6 1313.6,707.7 1371.3,713.7 1429.0,719.7 1429.0,725.8 1371.3,719.8 1313.6,713.8 1256.0,707.7 1198.3,701.6 1140.6,695.3 1082.9,689.1 1025.2,682.7 967.6,676.3 909.9,669.8 852.2,663.3 794.5,656.7 736.9,650.0 679.2,643.3 621.5,636.5" fill="#c7c9bd" stroke-linejoin="round" /><polygon points="621.5,635.9 679.2,642.7 736.9,649.4 794.5,656.1 852.2,662.7 909.9,669.2 967.6,675.7 1025.2,682.1 1082.9,688.5 1140.6,694.7 1198.3,701.0 1256.0,707.1 1313.6,713.2 1371.3,719.2 1429.0,725.2 1429.0,731.8 1371.3,725.8 1313.6,719.8 1256.0,713.7 1198.3,707.6 1140.6,701.3 1082.9,695.1 1025.2,688.7 967.6,682.3 909.9,675.8 852.2,669.3 794.5,662.7 736.9,656.0 679.2,649.3 621.5,642.5" fill="#d0d2c8" stroke-linejoin="round" /><polygon points="1391.0,726.8 1392.6,726.9 1394.1,727.1 1395.7,727.3 1397.3,727.4 1398.9,727.6 1400.4,727.8 1402.0,727.9 1403.6,728.1 1405.1,728.2 1406.7,728.4 1408.3,728.6 1409.9,728.7 1411.4,728.9 1413.0,729.1 1413.0,736.1 1411.4,735.9 1409.9,735.7 1408.3,735.6 1406.7,735.4 1405.1,735.2 1403.6,735.1 1402.0,734.9 1400.4,734.8 1398.9,734.6 1397.3,734.4 1395.7,734.3 1394.1,734.1 1392.6,733.9 1391.0,733.8" fill="#cdcfc4" stroke-linejoin="round" /><polygon points="639.0,643.5 641.1,643.7 643.1,644.0 645.2,644.2 647.3,644.5 649.4,644.7 651.4,645.0 653.5,645.2 655.6,645.5 657.6,645.7 659.7,645.9 661.8,646.2 663.9,646.4 665.9,646.7 668.0,646.9 668.0,653.9 665.9,653.7 663.9,653.4 661.8,653.2 659.7,652.9 657.6,652.7 655.6,652.5 653.5,652.2 651.4,652.0 649.4,651.7 647.3,651.5 645.2,651.2 643.1,651.0 641.1,650.7 639.0,650.5" fill="#d3d5cb" stroke-linejoin="round" /><polygon points="667.0,646.8 718.8,652.8 770.6,658.8 822.4,664.8 874.1,670.7 925.9,676.5 977.7,682.3 1029.5,688.1 1081.3,693.8 1133.1,699.4 1184.9,705.0 1236.6,710.6 1288.4,716.1 1340.2,721.5 1392.0,726.9 1392.0,733.7 1340.2,728.3 1288.4,722.9 1236.6,717.4 1184.9,711.8 1133.1,706.2 1081.3,700.6 1029.5,694.9 977.7,689.1 925.9,683.3 874.1,677.5 822.4,671.6 770.6,665.6 718.8,659.6 667.0,653.6" fill="#fffbe6" stroke-linejoin="round" /><polygon points="639.0,650.3 694.3,656.8 749.6,663.2 804.9,669.6 860.1,675.9 915.4,682.2 970.7,688.4 1026.0,694.5 1081.3,700.6 1136.6,706.6 1191.9,712.6 1247.1,718.5 1302.4,724.3 1357.7,730.1 1413.0,735.9 1413.0,740.7 1357.7,734.9 1302.4,729.1 1247.1,723.3 1191.9,717.4 1136.6,711.4 1081.3,705.4 1026.0,699.3 970.7,693.2 915.4,687.0 860.1,680.7 804.9,674.4 749.6,668.0 694.3,661.6 639.0,655.1" fill="#c9cbbd" stroke-linejoin="round" /><polyline points="667.0,646.8 718.8,652.8 770.6,658.8 822.4,664.8 874.1,670.7 925.9,676.5 977.7,682.3 1029.5,688.1 1081.3,693.8 1133.1,699.4 1184.9,705.0 1236.6,710.6 1288.4,716.1 1340.2,721.5 1392.0,726.9" fill="none" stroke="#1c1c1c" stroke-width="1"/><polyline points="639.0,650.3 694.3,656.8 749.6,663.2 804.9,669.6 860.1,675.9 915.4,682.2 970.7,688.4 1026.0,694.5 1081.3,700.6 1136.6,706.6 1191.9,712.6 1247.1,718.5 1302.4,724.3 1357.7,730.1 1413.0,735.9" fill="none" stroke="#1c1c1c" stroke-width="1"/><polyline points="639.0,655.1 694.3,661.6 749.6,668.0 804.9,674.4 860.1,680.7 915.4,687.0 970.7,693.2 1026.0,699.3 1081.3,705.4 1136.6,711.4 1191.9,717.4 1247.1,723.3 1302.4,729.1 1357.7,734.9 1413.0,740.7" fill="none" stroke="#1c1c1c" stroke-width="1"/><polygon points="666.7,621.3 672.4,621.9 672.4,647.9 666.7,651.8" fill="#ffffff" stroke="#1c1c1c" stroke-width="1" stroke-linejoin="round" /><polygon points="724.0,628.0 728.0,628.4 728.0,658.9 724.0,658.5" fill="#c6c8ba" stroke="#1c1c1c" stroke-width="1" stroke-linejoin="round" /><polygon points="728.6,628.5 733.6,629.1 733.6,655.1 728.6,659.0" fill="#ffffff" stroke="#1c1c1c" stroke-width="1" stroke-linejoin="round" /><polygon points="848.6,642.3 853.1,642.8 853.1,673.3 848.6,672.8" fill="#c6c8ba" stroke="#1c1c1c" stroke-width="1" stroke-linejoin="round" /><polygon points="853.7,642.9 859.2,643.5 859.2,669.5 853.7,673.4" fill="#ffffff" stroke="#1c1c1c" stroke-width="1" stroke-linejoin="round" /><polygon points="973.5,656.4 978.0,656.9 978.0,687.4 973.5,686.9" fill="#c6c8ba" stroke="#1c1c1c" stroke-width="1" stroke-linejoin="round" /><polygon points="978.6,656.9 983.6,657.5 983.6,683.5 978.6,687.4" fill="#ffffff" stroke="#1c1c1c" stroke-width="1" stroke-linejoin="round" /><polygon points="1080.0,668.1 1084.3,668.6 1084.3,699.1 1080.0,698.6" fill="#c6c8ba" stroke="#1c1c1c" stroke-width="1" stroke-linejoin="round" /><polygon points="1084.9,668.7 1090.4,669.3 1090.4,695.3 1084.9,699.2" fill="#ffffff" stroke="#1c1c1c" stroke-width="1" stroke-linejoin="round" /><polygon points="1204.6,681.6 1209.1,682.1 1209.1,712.6 1204.6,712.1" fill="#c6c8ba" stroke="#1c1c1c" stroke-width="1" stroke-linejoin="round" /><polygon points="1209.7,682.2 1215.2,682.8 1215.2,708.8 1209.7,712.7" fill="#ffffff" stroke="#1c1c1c" stroke-width="1" stroke-linejoin="round" /><polygon points="1329.2,694.8 1333.7,695.3 1333.7,725.8 1329.2,725.3" fill="#c6c8ba" stroke="#1c1c1c" stroke-width="1" stroke-linejoin="round" /><polygon points="1334.3,695.4 1339.3,695.9 1339.3,721.9 1334.3,725.9" fill="#ffffff" stroke="#1c1c1c" stroke-width="1" stroke-linejoin="round" /><polygon points="1390.3,701.2 1392.9,701.5 1392.9,732.0 1390.3,731.7" fill="#c6c8ba" stroke="#1c1c1c" stroke-width="1" stroke-linejoin="round" /><polygon points="611.5,616.9 621.5,617.9 621.5,637.5 611.5,640.0" fill="#fffbe6" stroke="#1c1c1c" stroke-width="1" stroke-linejoin="round" /><polygon points="611.0,640.6 621.5,637.7 639.2,637.3 639.2,639.9 627.9,642.4" fill="#fffdf0" stroke="#1c1c1c" stroke-width="1" stroke-linejoin="round" /><ellipse cx="626.3" cy="638.4" rx="4" ry="1.2" fill="#222"/><polygon points="1429.1,704.7 1447.3,706.6 1447.3,910.9 1412.9,907.5 1412.9,729.6 1419.4,728.8 1419.4,724.2 1429.1,725.2" fill="url(#colr)" stroke="#1c1c1c" stroke-width="1" stroke-linejoin="round" /><polygon points="1419.4,724.2 1429.1,725.2 1429.1,730.0 1419.4,728.8" fill="#fffdf0" stroke="#1c1c1c" stroke-width="1" stroke-linejoin="round" /><polygon points="1447.3,715.8 1452.8,716.2 1452.8,723.5 1447.3,728.3" fill="#c7c9bd" stroke="#1c1c1c" stroke-width="1" stroke-linejoin="round" /><polygon points="460.0,590.4 702.3,509.2 1824.6,632.4 1584.8,714.5 1584.8,718.5 460.0,595.9" fill="#272725" stroke="#272725" stroke-width="1" stroke-linejoin="round" /><polygon points="460.0,590.4 702.3,509.2 801.0,542.7 661.9,592.0" fill="#f2e6d5" stroke="#1c1c1c" stroke-width="1" stroke-linejoin="round" /><polygon points="1482.9,682.5 1624.4,634.5 1824.6,632.4 1584.8,714.5" fill="#f2e6d5" stroke="#1c1c1c" stroke-width="1" stroke-linejoin="round" /><polygon points="661.9,592.0 721.7,567.0 1545.9,657.9 1482.9,682.5" fill="#45453f" stroke="#45453f" stroke-width="1.2" stroke-linejoin="round" /><polygon points="750.9,558.1 801.0,542.7 1624.4,634.5 1571.8,649.5" fill="#45453f" stroke="#45453f" stroke-width="1.2" stroke-linejoin="round" /><polygon points="704.0,565.4 721.7,567.0 661.9,592.0 645.7,589.6" fill="#fffbe8" stroke="#1c1c1c" stroke-width="1" stroke-linejoin="round" /><polygon points="786.4,541.1 801.0,542.7 750.9,558.1 734.7,556.5" fill="#fffbe8" stroke="#1c1c1c" stroke-width="1" stroke-linejoin="round" /><polygon points="1482.9,682.5 1545.9,657.9 1559.7,659.6 1499.0,683.8" fill="#fffbe8" stroke="#1c1c1c" stroke-width="1" stroke-linejoin="round" /><polygon points="1571.8,649.5 1624.4,634.5 1642.2,635.3 1587.2,651.5" fill="#fffbe8" stroke="#1c1c1c" stroke-width="1" stroke-linejoin="round" /><polygon points="660.3,525.7 702.3,509.2 1824.6,632.4 1778.0,649.8" fill="#3c3c39" stroke="#111110" stroke-width="1.4" stroke-linejoin="round" /><polyline shape-rendering="geometricPrecision" points="668.7,522.4 1787.3,646.3" fill="none" stroke="#0c0c0b" stroke-width="1.5"/><polyline shape-rendering="geometricPrecision" points="677.1,519.1 1796.6,642.8" fill="none" stroke="#0c0c0b" stroke-width="1.5"/><polyline shape-rendering="geometricPrecision" points="685.5,515.8 1806.0,639.4" fill="none" stroke="#0c0c0b" stroke-width="1.5"/><polyline shape-rendering="geometricPrecision" points="693.9,512.5 1815.3,635.9" fill="none" stroke="#0c0c0b" stroke-width="1.5"/><polygon points="574.5,550.0 598.8,541.9 1706.9,666.0 1692.3,673.3" fill="#3c3c39" stroke="#111110" stroke-width="1.4" stroke-linejoin="round" /><polyline shape-rendering="geometricPrecision" points="582.6,547.3 1697.2,670.9" fill="none" stroke="#0c0c0b" stroke-width="1.5"/><polyline shape-rendering="geometricPrecision" points="590.7,544.6 1702.0,668.4" fill="none" stroke="#0c0c0b" stroke-width="1.5"/><polygon points="460.0,590.4 510.7,575.1 1622.8,700.8 1584.8,714.5" fill="#3c3c39" stroke="#111110" stroke-width="1.4" stroke-linejoin="round" /><polyline shape-rendering="geometricPrecision" points="470.1,587.3 1592.4,711.8" fill="none" stroke="#0c0c0b" stroke-width="1.5"/><polyline shape-rendering="geometricPrecision" points="480.3,584.3 1600.0,709.0" fill="none" stroke="#0c0c0b" stroke-width="1.5"/><polyline shape-rendering="geometricPrecision" points="490.4,581.2 1607.6,706.3" fill="none" stroke="#0c0c0b" stroke-width="1.5"/><polyline shape-rendering="geometricPrecision" points="500.6,578.2 1615.2,703.5" fill="none" stroke="#0c0c0b" stroke-width="1.5"/><polygon points="460.0,590.4 1584.8,714.5 1584.8,720.8 1500.0,712.3 1400.0,702.0 1300.0,691.6 1200.0,680.9 1100.0,670.1 1000.0,659.1 900.0,647.9 800.0,636.5 700.0,625.0 600.0,613.2 500.0,601.2 460.0,596.4" fill="#222220" stroke="#272725" stroke-width="1" stroke-linejoin="round" /><polygon points="661.9,524.9 671.6,515.2 699.1,510.4 702.3,509.2 702.3,513.0 668.0,528.0" fill="#272725" stroke="#272725" stroke-width="1" stroke-linejoin="round" /><polygon points="574.5,546.8 577.8,544.3 585.9,541.1 598.8,541.9 574.5,550.0" fill="#272725" stroke="#272725" stroke-width="1" stroke-linejoin="round" /><polygon points="460.0,590.4 475.0,585.9 487.2,583.1 490.4,577.5 510.7,575.1 470.0,592.0" fill="#272725" stroke="#272725" stroke-width="1" stroke-linejoin="round" /><polygon points="1584.8,718.3 1778.5,651.5 1778.5,663.3 1585.6,729.9" fill="#f3e6d6" stroke="#1c1c1c" stroke-width="1" stroke-linejoin="round" /><polygon points="1585.6,729.9 1778.5,663.3 1778.5,672.5 1586.2,737.7" fill="#fffef6" stroke="#1c1c1c" stroke-width="1" stroke-linejoin="round" /><polyline points="1585.0,721.9 1778.5,655.1" fill="none" stroke="#1c1c1c" stroke-width="1"/><polyline points="1585.0,726.4 1778.5,659.6" fill="none" stroke="#1c1c1c" stroke-width="1"/><polyline points="1585.4,728.9 1778.5,662.3" fill="none" stroke="#dcc49c" stroke-width="1"/><polygon points="1778.5,654.7 1824.6,640.1 1824.6,653.3 1778.5,666.2" fill="#6f4f3e" stroke="#1c1c1c" stroke-width="1" stroke-linejoin="round" /><polygon points="1778.0,649.8 1824.6,632.4 1824.6,640.1 1778.5,654.7" fill="#272725" stroke="#272725" stroke-width="1" stroke-linejoin="round" /><polygon points="1778.5,666.2 1824.6,653.3 1824.6,708.9 1778.5,723.4" fill="#ffffff" stroke="#1c1c1c" stroke-width="1" stroke-linejoin="round" /><polygon points="1781.5,669.5 1791.0,667.0 1791.0,709.7 1781.5,712.9" fill="#c3c5b9" stroke="#1c1c1c" stroke-width="1" stroke-linejoin="round" /><polygon points="1794.2,665.9 1810.4,661.3 1810.4,701.6 1794.2,706.5" fill="#c3c5b9" stroke="#1c1c1c" stroke-width="1" stroke-linejoin="round" /><polygon points="1813.6,660.4 1822.6,657.9 1822.6,698.2 1813.6,701.2" fill="#c3c5b9" stroke="#1c1c1c" stroke-width="1" stroke-linejoin="round" /></g></svg>
<svg class="a" style="left:1680px;top:380px;" width="230" height="130" viewBox="1680 380 230 130"><defs><radialGradient id="shd" cx="0.5" cy="0.5" r="0.5"><stop offset="0" stop-color="#9c9c9c"/><stop offset="0.55" stop-color="#c8c8c8"/><stop offset="1" stop-color="#ffffff" stop-opacity="0"/></radialGradient><linearGradient id="cf" x1="0" x2="0" y1="0" y2="1"><stop offset="0" stop-color="#f0f0f1"/><stop offset="1" stop-color="#dddee1"/></linearGradient></defs><ellipse cx="1791.800" cy="474" rx="100.500" ry="29.300" fill="#f6f6f6" stroke="#cccccc" stroke-width="1" stroke-dasharray="3,1.500"/><ellipse cx="1791.800" cy="471.500" rx="76.900" ry="21.400" fill="#ffffff" stroke="#d2d2d2" stroke-width="1"/><ellipse cx="1790" cy="474.500" rx="64" ry="13" fill="url(#shd)"/><g fill="#e4e4e4"><rect x="1711" y="454" width="24" height="5" rx="2" transform="rotate(-14 1723 456)"/><rect x="1725" y="490" width="27" height="7" rx="2" transform="rotate(-8 1738 493)"/><rect x="1864" y="478" width="26" height="8" rx="2" transform="rotate(-16 1877 482)"/><rect x="1781" y="391.500" width="24" height="2.500" rx="1" transform="rotate(4 1793 392)"/></g><polygon points="1741.300,395.300 1806.400,400.900 1806.400,476.400 1742.700,465.600" fill="url(#cf)" stroke="#a9abae" stroke-width="1"/><polygon points="1806.400,400.900 1839.400,392.500 1838.500,459 1806.400,476.400" fill="#e6e7e9" stroke="#a9abae" stroke-width="1"/><polygon points="1741.300,395.300 1775.300,388.200 1839.400,392.500 1806.400,400.900" fill="#f1f1f2" stroke="#a9abae" stroke-width="1"/><rect x="1794.200" y="413.700" width="18.300" height="47.600" fill="#d3d6dc" opacity="0.650"/><text transform="matrix(1,0.120,0,1,1774.300,443.600)" font-family="Liberation Sans, sans-serif" font-weight="700" font-size="21" fill="#8d9299" text-anchor="middle" textLength="45.500" lengthAdjust="spacingAndGlyphs">FRONT</text><text transform="matrix(1,-0.400,0,1,1823.400,439.500)" font-family="Liberation Sans, sans-serif" font-weight="700" font-size="20" fill="#8d9299" text-anchor="middle" textLength="21" lengthAdjust="spacingAndGlyphs">RIGHT</text></svg>
<svg class="a" style="left:1878px;top:550.5px;" width="48" height="167" viewBox="0 0 48 167"><rect x="0.500" y="0.500" width="47" height="166" rx="5" fill="#f3f3f3" stroke="#c2c2c2"/><circle cx="38" cy="9" r="4.800" fill="#e8e8e8" stroke="#bdbdbd"/><path d="M35.500,6.500l5,5M40.500,6.500l-5,5" stroke="#b0b0b0" stroke-width="1"/><path d="M8,42a16.500,16.500 0 0 1 16.500-16.500h16v16a16.500,16.500 0 0 1-32.500,0.500z" fill="#ededed" stroke="#9a9a9a" stroke-width="1.300"/><circle cx="24.500" cy="40.500" r="9.500" fill="#f8f8f8" stroke="#9a9a9a" stroke-width="1.300"/><path d="M10,50c6,-4 22,-4 29,0" fill="none" stroke="#9a9a9a" stroke-width="1.200"/><polygon points="21,72 28,72 24.500,75.500" fill="#8a8a8a"/><path d="M4,83.500H44" stroke="#cfcfcf" stroke-width="1"/><rect x="12" y="96" width="16.500" height="16" fill="#b9dba0" stroke="#8dbf6c" stroke-width="1"/><circle cx="32" cy="112" r="4.800" fill="#f4f4f4" stroke="#8a8a8a" stroke-width="1.300"/><path d="M35.500,115.500l4,4" stroke="#8a8a8a" stroke-width="1.800"/><polygon points="21,135 28,135 24.500,138.500" fill="#8a8a8a"/><circle cx="38" cy="157" r="4.800" fill="#e8e8e8" stroke="#bdbdbd"/><path d="M35,156h6M35,158.500h6" stroke="#b0b0b0" stroke-width="1"/></svg>
<div class="a" style="left:1927px;top:294px;width:26px;height:1168px;background:#ebebeb;"></div>
<div class="a" style="left:1927px;top:294px;width:26px;height:26px;background:#e6e6e6;border-bottom:1px solid #d9d9d9;box-sizing:border-box;"></div>
<svg class="a" style="left:1930px;top:299px;" width="20" height="14" viewBox="0 0 20 14"><path d="M3.500,10.500L10,4L16.500,10.500" fill="none" stroke="#7c7c7c" stroke-width="1.800"/></svg>
<div class="a" style="left:1927px;top:1437px;width:26px;height:1px;background:#d9d9d9;"></div>
<svg class="a" style="left:1930px;top:1443px;" width="20" height="14" viewBox="0 0 20 14"><path d="M3.500,4L10,10.500L16.500,4" fill="none" stroke="#7c7c7c" stroke-width="1.800"/></svg>
<div class="a" style="left:355px;top:1462px;width:1601px;height:28px;background:#f5f5f5;"></div>
<div class="a" style="left:358px;top:1462px;width:649px;height:26px;background:#f1f1f1;"></div>
<span class="t" style="left:393.40px;top:1465.56px;font-size:18px;color:#333;letter-spacing:-0.937px;word-spacing:0.937px;">1 : 200</span>
<div class="a" style="left:1007px;top:1462px;width:920px;height:26px;background:#e9e9e9;"></div>
<div class="a" style="left:1007px;top:1462px;width:25.5px;height:26px;background:#e2e2e2;border-right:1px solid #d6d6d6;box-sizing:border-box;"></div>
<div class="a" style="left:1901.5px;top:1462px;width:25.5px;height:26px;background:#e2e2e2;border-left:1px solid #d6d6d6;box-sizing:border-box;"></div>
<svg class="a" style="left:1012px;top:1466px;" width="14" height="18" viewBox="0 0 14 18"><path d="M10,2.500L4,9L10,15.500" fill="none" stroke="#777" stroke-width="1.800"/></svg>
<svg class="a" style="left:1908px;top:1466px;" width="14" height="18" viewBox="0 0 14 18"><path d="M4,2.500L10,9L4,15.500" fill="none" stroke="#777" stroke-width="1.800"/></svg>
<div class="a" style="left:1454.5px;top:1471.5px;width:26px;height:7px;background:#c9c9c9;border-radius:3.5px;"></div>
<div class="a" style="left:1927px;top:1462px;width:27px;height:26px;background:#f1f1f1;"></div>
<svg class="a" style="left:1936px;top:1470px;" width="14" height="14" viewBox="0 0 14 14"><rect x="8" y="2" width="3" height="3" fill="#666"/><rect x="8" y="8" width="3" height="3" fill="#666"/><rect x="2" y="8" width="3" height="3" fill="#666"/></svg>
<svg class="a" style="left:355px;top:1462px;" width="660" height="27" viewBox="355 1462 660 27"><defs><pattern id="chk" width="4" height="4" patternUnits="userSpaceOnUse"><rect width="4" height="4" fill="#f4f4f4"/><rect width="2" height="2" fill="#8a8a8a"/><rect x="2" y="2" width="2" height="2" fill="#8a8a8a"/></pattern></defs><rect x="482.500" y="1466.500" width="23.500" height="17.500" fill="url(#chk)" stroke="#666" stroke-width="1.300"/><g transform="translate(521,1464)"><polygon points="1,6 15,6 15,20 1,20" fill="#6cb6ee" stroke="#2f8fe0" stroke-width="1.300"/><polygon points="1,6 7,1 21,1 15,6" fill="#a9d6f7" stroke="#2f8fe0" stroke-width="1.300"/><polygon points="15,6 21,1 21,15 15,20" fill="#3f97e0" stroke="#2f8fe0" stroke-width="1.300"/><rect x="4" y="10" width="8" height="2.800" fill="#e03030"/><rect x="4" y="14.500" width="8" height="2.800" fill="#3fae5a"/></g><g transform="translate(558,1464)"><circle cx="9.500" cy="9.500" r="5" fill="#f9a825"/><path d="M9.500,0.500v3M9.500,15.500v3M0.500,9.500h3M15.500,9.500h3M3,3l2,2M14,14l2,2M3,16l2-2M14,5l2-2" stroke="#f9a825" stroke-width="1.700"/></g><circle cx="577.5" cy="1478" r="4.700" fill="#4bc0c8"/><rect x="575.3" y="1482.6" width="4.400" height="3" fill="#777"/><circle cx="606" cy="1473" r="7.500" fill="#f4f4f4" stroke="#8a8a8a" stroke-width="1.400"/><ellipse cx="605" cy="1483.500" rx="8.500" ry="2" fill="#b5b5b5"/><circle cx="615.5" cy="1478" r="4.700" fill="#4bc0c8"/><rect x="613.3" y="1482.6" width="4.400" height="3" fill="#777"/><path d="M635,1468l5,2c2,6 3,8 7,10h7c3-2 4-5 5-9l-3-1c-3-2-12-2-16,0z" fill="none" stroke="#777" stroke-width="1.400"/><path d="M644,1466h6" stroke="#777" stroke-width="1.400"/><circle cx="653.5" cy="1478" r="4.700" fill="#4bc0c8"/><rect x="651.3" y="1482.6" width="4.400" height="3" fill="#777"/><path d="M679,1484v-10h10" fill="none" stroke="#666" stroke-width="2.400"/><path d="M683,1464v4M672,1478h4" stroke="#2b8fe6" stroke-width="2"/><path d="M685,1475l9,9M694,1475l-9,9" stroke="#e02222" stroke-width="2.400"/><path d="M716.500,1484v-10h10" fill="none" stroke="#666" stroke-width="2.400"/><path d="M720.500,1464v4M709.500,1478h4" stroke="#2b8fe6" stroke-width="2"/><circle cx="729" cy="1478" r="4.700" fill="#4bc0c8"/><rect x="726.8" y="1482.6" width="4.400" height="3" fill="#777"/><g transform="translate(749,1463)"><path d="M1,11L11,2L21,11" fill="none" stroke="#666" stroke-width="2.200"/><path d="M4,10v10h9" fill="none" stroke="#666" stroke-width="1.600"/><polygon points="11,2 15,1 22,9 21,11" fill="#8a8a8a"/><rect x="12" y="13" width="11" height="9" fill="#f2a21c"/><path d="M14.500,13v-2.500a3,3 0 0 1 6,0v2.500" fill="none" stroke="#f2a21c" stroke-width="1.600"/></g><g fill="none" stroke="#666" stroke-width="1.600"><circle cx="792" cy="1478" r="3.800"/><circle cx="802.500" cy="1478" r="3.800"/><path d="M795.500,1477h3.500M788.500,1476l5-5M805.500,1476l-2-5"/></g><circle cx="836" cy="1473.5" r="6.300" fill="#4bc0c8"/><rect x="833.8" y="1480.0" width="4.400" height="3" fill="#777"/><g fill="none" stroke="#777" stroke-width="1.400"><rect x="865" y="1467" width="13" height="10"/><path d="M869,1471h11v9" /><path d="M872,1484h3M878,1484h3M883,1481v-3M872,1478v3" stroke-dasharray="2,1.500"/></g><g fill="none" stroke="#777" stroke-width="1.200"><path d="M900,1483v-14l6-5h14v14l-6,5zM900,1469h14v14M914,1469l6-5M907,1464v14h13M900,1476h14"/></g><path d="M901,1478h12M905,1474v9M909,1474v9" stroke="#e02222" stroke-width="1.300"/><circle cx="920" cy="1478" r="4.700" fill="#f9bc3c"/><rect x="917.8" y="1482.6" width="4.400" height="3" fill="#777"/><g transform="translate(940,1467)"><polygon points="1,6 12,6 12,16 1,16" fill="#f4f4f4" stroke="#777" stroke-width="1.400"/><polygon points="6,3 13,1 19,3 12,6" fill="#6cb6ee"/><polygon points="12,6 19,3 19,12 12,16" fill="#3f8fe0"/></g><g fill="none" stroke="#555" stroke-width="1.300"><path d="M976.500,1464v6M993.500,1464v6M976.500,1467h17"/><path d="M976.500,1472v10h4M983,1482h3M988,1482h2" /></g><polygon points="976.500,1467 980,1465 980,1469" fill="#555"/><polygon points="993.500,1467 990,1465 990,1469" fill="#555"/><circle cx="994.5" cy="1478" r="4.700" fill="#4bc0c8"/><rect x="992.3" y="1482.6" width="4.400" height="3" fill="#777"/></svg>
<div class="a" style="left:1956px;top:261px;width:3px;height:1229px;background:#bcbcbc;"></div>
<div class="a" style="left:1959px;top:261px;width:600px;height:1229px;background:#ffffff;"></div>
<div class="a" style="left:1959px;top:286px;width:3px;height:1204px;background:#f0f0f0;"></div>
<div class="a" style="left:1959px;top:261px;width:600px;height:25px;background:#dadada;"></div>
<span class="t" style="left:1963.90px;top:264.96px;font-size:18px;color:#333;letter-spacing:-0.372px;word-spacing:0.747px;">Project Browser - <span style="letter-spacing:-1.122px">JEMBATAN NIS PCI GIRDER</span></span>
<svg class="a" style="left:2541px;top:266px;" width="18" height="18" viewBox="0 0 18 18"><path d="M2.500,3L15,15M15,3L2.500,15" stroke="#7c7c7c" stroke-width="2.800" stroke-linecap="round"/></svg>
<div class="a" style="left:1974px;top:299.5px;width:573px;height:38.5px;background:#fff;border:1px solid #d4d4d4;box-sizing:border-box;"></div>
<svg class="a" style="left:1984px;top:304px;" width="32" height="32" viewBox="0 0 32 32"><circle cx="12.800" cy="12.800" r="8.300" fill="none" stroke="#8a8a8a" stroke-width="2"/><path d="M19,19L27,27" stroke="#8a8a8a" stroke-width="2.600"/></svg>
<span class="t" style="left:2024.10px;top:311.32px;font-size:19px;color:#9aa6b4;letter-spacing:-1.461px;">Search</span>
<div class="a" style="left:2534px;top:351px;width:25px;height:1137px;background:#ebebeb;"></div>
<div class="a" style="left:2534px;top:351px;width:25px;height:23px;background:#e6e6e6;border-bottom:1px solid #d9d9d9;box-sizing:border-box;"></div>
<svg class="a" style="left:2537px;top:355px;" width="20" height="14" viewBox="0 0 20 14"><path d="M3.500,10.500L10,4L16.500,10.500" fill="none" stroke="#7c7c7c" stroke-width="1.800"/></svg>
<div class="a" style="left:2543.5px;top:428px;width:6.5px;height:322px;background:#c9c9c9;border-radius:3.5px;"></div>
<div class="a" style="left:2534px;top:1467px;width:25px;height:1px;background:#d9d9d9;"></div>
<svg class="a" style="left:2537px;top:1471px;" width="20" height="14" viewBox="0 0 20 14"><path d="M3.500,4L10,10.500L16.500,4" fill="none" stroke="#7c7c7c" stroke-width="1.800"/></svg>
<div class="a" style="left:1962px;top:710.3px;width:571px;height:29.5px;background:#f0f0f0;border:1px solid #e2e2e2;box-sizing:border-box;"></div>
<span class="t" style="left:2073.50px;top:356.76px;font-size:18px;color:#444;letter-spacing:-0.930px;word-spacing:0.930px;">DENAH PONDASI</span>
<span class="t" style="left:2073.50px;top:386.76px;font-size:18px;color:#444;letter-spacing:-1.044px;word-spacing:1.044px;">DENAH WATERDRAIN</span>
<span class="t" style="left:2073.50px;top:416.76px;font-size:18px;color:#444;letter-spacing:-0.853px;word-spacing:0.853px;">Level Jalan</span>
<span class="t" style="left:2073.50px;top:446.76px;font-size:18px;color:#444;letter-spacing:-1.175px;word-spacing:1.175px;">PELAT LANTAI</span>
<span class="t" style="left:2073.50px;top:476.76px;font-size:18px;color:#444;letter-spacing:-0.987px;word-spacing:0.987px;">POT TULANGAN ATAS</span>
<span class="t" style="left:2073.50px;top:506.76px;font-size:18px;color:#444;letter-spacing:-0.883px;word-spacing:0.883px;">POT TULANGAN BAWAH</span>
<span class="t" style="left:2073.50px;top:536.76px;font-size:18px;color:#444;letter-spacing:-1.248px;word-spacing:1.248px;">SECTION DENAH</span>
<span class="t" style="left:2073.50px;top:566.76px;font-size:18px;color:#444;letter-spacing:-0.844px;">Site</span>
<span class="t" style="left:2019.60px;top:596.76px;font-size:18px;color:#444;letter-spacing:-0.583px;word-spacing:0.583px;">Floor Plans</span>
<span class="t" style="left:2073.50px;top:626.76px;font-size:18px;color:#444;letter-spacing:-0.853px;word-spacing:0.853px;">Level Jalan</span>
<span class="t" style="left:2019.60px;top:656.76px;font-size:18px;color:#444;letter-spacing:-0.469px;word-spacing:0.469px;">Ceiling Plans</span>
<span class="t" style="left:2019.60px;top:686.76px;font-size:18px;color:#444;letter-spacing:-0.717px;word-spacing:0.717px;">3D Views</span>
<span class="t" style="left:2073.50px;top:716.76px;font-size:18px;color:#222;letter-spacing:0.178px;word-spacing:-0.178px;font-weight:700;">3D <span style="letter-spacing:-0.572px">JEMBATAN</span></span>
<span class="t" style="left:2073.50px;top:746.76px;font-size:18px;color:#444;letter-spacing:-0.241px;word-spacing:0.616px;">3D <span style="letter-spacing:-0.991px">VIEW LANTAI</span></span>
<span class="t" style="left:2073.50px;top:776.76px;font-size:18px;color:#444;letter-spacing:0.017px;word-spacing:-0.017px;">Analytical Model</span>
<span class="t" style="left:2073.50px;top:806.76px;font-size:18px;color:#444;letter-spacing:-1.208px;word-spacing:1.208px;">JOINT EXPANSIONS GEOMETRI</span>
<span class="t" style="left:2073.50px;top:836.76px;font-size:18px;color:#444;letter-spacing:-0.959px;">PENULANGAN</span>
<span class="t" style="left:2073.50px;top:866.76px;font-size:18px;color:#444;letter-spacing:-0.972px;word-spacing:0.972px;">PLAT LANTAI</span>
<span class="t" style="left:2073.50px;top:896.76px;font-size:18px;color:#444;letter-spacing:-0.186px;word-spacing:0.936px;"><span style="letter-spacing:-0.936px">PLAT LANTAI </span>2</span>
<span class="t" style="left:2073.50px;top:926.76px;font-size:18px;color:#444;letter-spacing:-0.882px;">{3D}</span>
<span class="t" style="left:2019.60px;top:956.76px;font-size:18px;color:#444;letter-spacing:-0.244px;word-spacing:0.244px;">Elevations (Building Elevation)</span>
<span class="t" style="left:2019.60px;top:986.76px;font-size:18px;color:#444;letter-spacing:-0.281px;word-spacing:0.281px;">Sections <span style="letter-spacing:-1.031px">(POTONGAN)</span></span>
<span class="t" style="left:2019.60px;top:1016.76px;font-size:18px;color:#444;letter-spacing:-0.233px;word-spacing:0.233px;">Detail Views <span style="letter-spacing:-0.983px">(ABUTMENT)</span></span>
<span class="t" style="left:2073.50px;top:1046.76px;font-size:18px;color:#444;letter-spacing:-1.157px;">ABUTMENT</span>
<span class="t" style="left:2073.50px;top:1076.76px;font-size:18px;color:#444;letter-spacing:-0.914px;">ABUTMENT-COPPING</span>
<span class="t" style="left:2073.50px;top:1106.76px;font-size:18px;color:#444;letter-spacing:-0.867px;word-spacing:0.867px;">PENULANGAN ABUTMENT</span>
<span class="t" style="left:2073.50px;top:1136.76px;font-size:18px;color:#444;letter-spacing:-0.818px;word-spacing:0.818px;">PENULANGAN ABUTMENT-COPPING</span>
<span class="t" style="left:2019.60px;top:1166.76px;font-size:18px;color:#444;letter-spacing:-0.201px;word-spacing:0.201px;">Detail Views <span style="letter-spacing:-0.951px">(DIAFRAGMA)</span></span>
<span class="t" style="left:2019.60px;top:1196.76px;font-size:18px;color:#444;letter-spacing:-0.504px;word-spacing:0.504px;">Detail Views <span style="letter-spacing:-1.254px">(GIRDER)</span></span>
<span class="t" style="left:2073.50px;top:1226.76px;font-size:18px;color:#444;letter-spacing:-1.530px;word-spacing:1.530px;">DETAIL GIRDER</span>
<span class="t" style="left:2073.50px;top:1256.76px;font-size:18px;color:#444;letter-spacing:-1.561px;word-spacing:1.561px;">GIRDER COPPING</span>
<span class="t" style="left:2073.50px;top:1286.76px;font-size:18px;color:#444;letter-spacing:-1.800px;word-spacing:-0.331px;">GIRDER EDGE</span>
<span class="t" style="left:2073.50px;top:1316.76px;font-size:18px;color:#444;letter-spacing:-1.300px;word-spacing:1.300px;">GIRDER MID</span>
<span class="t" style="left:2073.50px;top:1346.76px;font-size:18px;color:#444;letter-spacing:-1.256px;word-spacing:1.256px;">POT PONDASI</span>
<span class="t" style="left:2019.60px;top:1376.76px;font-size:18px;color:#444;letter-spacing:-0.392px;word-spacing:0.642px;">Detail Views <span style="letter-spacing:-1.142px">(PELAT INJAK)</span></span>
<span class="t" style="left:2019.60px;top:1406.76px;font-size:18px;color:#444;letter-spacing:-0.272px;word-spacing:0.522px;">Detail Views <span style="letter-spacing:-1.022px">(PELAT LANTAI)</span></span>
<span class="t" style="left:2019.60px;top:1436.76px;font-size:18px;color:#444;letter-spacing:-0.165px;word-spacing:0.165px;">Detail Views <span style="letter-spacing:-0.915px">(WINGWALL)</span></span>
<span class="t" style="left:2024.70px;top:1466.76px;font-size:18px;color:#444;letter-spacing:-0.596px;">Legends</span>
<svg class="a" style="left:0px;top:0px;pointer-events:none;" width="2559" height="1490" viewBox="0 0 2559 1490"><path d="M1975.5,351V1446.3" stroke="#a8a8a8" stroke-width="1" stroke-dasharray="2,2" fill="none"/><path d="M1999.5,366.3H2036" stroke="#a8a8a8" stroke-width="1" stroke-dasharray="2,2" fill="none"/><path d="M1999.5,396.3H2036" stroke="#a8a8a8" stroke-width="1" stroke-dasharray="2,2" fill="none"/><path d="M1999.5,426.3H2036" stroke="#a8a8a8" stroke-width="1" stroke-dasharray="2,2" fill="none"/><path d="M1999.5,456.3H2036" stroke="#a8a8a8" stroke-width="1" stroke-dasharray="2,2" fill="none"/><path d="M1999.5,486.3H2036" stroke="#a8a8a8" stroke-width="1" stroke-dasharray="2,2" fill="none"/><path d="M1999.5,516.3H2036" stroke="#a8a8a8" stroke-width="1" stroke-dasharray="2,2" fill="none"/><path d="M1999.5,546.3H2036" stroke="#a8a8a8" stroke-width="1" stroke-dasharray="2,2" fill="none"/><path d="M1999.5,576.3H2036" stroke="#a8a8a8" stroke-width="1" stroke-dasharray="2,2" fill="none"/><path d="M1999.5,351V576.3" stroke="#a8a8a8" stroke-width="1" stroke-dasharray="2,2" fill="none"/><path d="M1975.5,606.3H1989" stroke="#a8a8a8" stroke-width="1" stroke-dasharray="2,2" fill="none"/><path d="M1999.5,636.3H2036" stroke="#a8a8a8" stroke-width="1" stroke-dasharray="2,2" fill="none"/><path d="M1999.5,620.3V636.3" stroke="#a8a8a8" stroke-width="1" stroke-dasharray="2,2" fill="none"/><path d="M1975.5,666.3H1989" stroke="#a8a8a8" stroke-width="1" stroke-dasharray="2,2" fill="none"/><path d="M1975.5,696.3H1989" stroke="#a8a8a8" stroke-width="1" stroke-dasharray="2,2" fill="none"/><path d="M1999.5,726.3H2036" stroke="#a8a8a8" stroke-width="1" stroke-dasharray="2,2" fill="none"/><path d="M1999.5,756.3H2036" stroke="#a8a8a8" stroke-width="1" stroke-dasharray="2,2" fill="none"/><path d="M1999.5,786.3H2036" stroke="#a8a8a8" stroke-width="1" stroke-dasharray="2,2" fill="none"/><path d="M1999.5,816.3H2036" stroke="#a8a8a8" stroke-width="1" stroke-dasharray="2,2" fill="none"/><path d="M1999.5,846.3H2036" stroke="#a8a8a8" stroke-width="1" stroke-dasharray="2,2" fill="none"/><path d="M1999.5,876.3H2036" stroke="#a8a8a8" stroke-width="1" stroke-dasharray="2,2" fill="none"/><path d="M1999.5,906.3H2036" stroke="#a8a8a8" stroke-width="1" stroke-dasharray="2,2" fill="none"/><path d="M1999.5,936.3H2036" stroke="#a8a8a8" stroke-width="1" stroke-dasharray="2,2" fill="none"/><path d="M1999.5,710.3V936.3" stroke="#a8a8a8" stroke-width="1" stroke-dasharray="2,2" fill="none"/><path d="M1975.5,966.3H1989" stroke="#a8a8a8" stroke-width="1" stroke-dasharray="2,2" fill="none"/><path d="M1975.5,996.3H1989" stroke="#a8a8a8" stroke-width="1" stroke-dasharray="2,2" fill="none"/><path d="M1975.5,1026.3H1989" stroke="#a8a8a8" stroke-width="1" stroke-dasharray="2,2" fill="none"/><path d="M1999.5,1056.3H2036" stroke="#a8a8a8" stroke-width="1" stroke-dasharray="2,2" fill="none"/><path d="M1999.5,1086.3H2036" stroke="#a8a8a8" stroke-width="1" stroke-dasharray="2,2" fill="none"/><path d="M1999.5,1116.3H2036" stroke="#a8a8a8" stroke-width="1" stroke-dasharray="2,2" fill="none"/><path d="M1999.5,1146.3H2036" stroke="#a8a8a8" stroke-width="1" stroke-dasharray="2,2" fill="none"/><path d="M1999.5,1040.3V1146.3" stroke="#a8a8a8" stroke-width="1" stroke-dasharray="2,2" fill="none"/><path d="M1975.5,1176.3H1989" stroke="#a8a8a8" stroke-width="1" stroke-dasharray="2,2" fill="none"/><path d="M1975.5,1206.3H1989" stroke="#a8a8a8" stroke-width="1" stroke-dasharray="2,2" fill="none"/><path d="M1999.5,1236.3H2036" stroke="#a8a8a8" stroke-width="1" stroke-dasharray="2,2" fill="none"/><path d="M1999.5,1266.3H2036" stroke="#a8a8a8" stroke-width="1" stroke-dasharray="2,2" fill="none"/><path d="M1999.5,1296.3H2036" stroke="#a8a8a8" stroke-width="1" stroke-dasharray="2,2" fill="none"/><path d="M1999.5,1326.3H2036" stroke="#a8a8a8" stroke-width="1" stroke-dasharray="2,2" fill="none"/><path d="M1999.5,1356.3H2036" stroke="#a8a8a8" stroke-width="1" stroke-dasharray="2,2" fill="none"/><path d="M1999.5,1220.3V1356.3" stroke="#a8a8a8" stroke-width="1" stroke-dasharray="2,2" fill="none"/><path d="M1975.5,1386.3H1989" stroke="#a8a8a8" stroke-width="1" stroke-dasharray="2,2" fill="none"/><path d="M1975.5,1416.3H1989" stroke="#a8a8a8" stroke-width="1" stroke-dasharray="2,2" fill="none"/><path d="M1975.5,1446.3H1989" stroke="#a8a8a8" stroke-width="1" stroke-dasharray="2,2" fill="none"/><rect x="2043.600" y="353.90000000000003" width="22.800" height="22.800" fill="#fff" stroke="#5c5c5c" stroke-width="1.200" stroke-dasharray="4.500,1.700"/><rect x="2046.800" y="357.1" width="16.400" height="16.400" fill="#62aee8" stroke="#3b87c8" stroke-width="1.100"/><rect x="2043.600" y="383.90000000000003" width="22.800" height="22.800" fill="#fff" stroke="#5c5c5c" stroke-width="1.200" stroke-dasharray="4.500,1.700"/><rect x="2046.800" y="387.1" width="16.400" height="16.400" fill="#f3f3f3" stroke="#8d8d8d" stroke-width="1.100"/><rect x="2043.600" y="413.90000000000003" width="22.800" height="22.800" fill="#fff" stroke="#5c5c5c" stroke-width="1.200" stroke-dasharray="4.500,1.700"/><rect x="2046.800" y="417.1" width="16.400" height="16.400" fill="#f3f3f3" stroke="#8d8d8d" stroke-width="1.100"/><rect x="2043.600" y="443.90000000000003" width="22.800" height="22.800" fill="#fff" stroke="#5c5c5c" stroke-width="1.200" stroke-dasharray="4.500,1.700"/><rect x="2046.800" y="447.1" width="16.400" height="16.400" fill="#f3f3f3" stroke="#8d8d8d" stroke-width="1.100"/><rect x="2043.600" y="473.90000000000003" width="22.800" height="22.800" fill="#fff" stroke="#5c5c5c" stroke-width="1.200" stroke-dasharray="4.500,1.700"/><rect x="2046.800" y="477.1" width="16.400" height="16.400" fill="#f3f3f3" stroke="#8d8d8d" stroke-width="1.100"/><rect x="2043.600" y="503.9" width="22.800" height="22.800" fill="#fff" stroke="#5c5c5c" stroke-width="1.200" stroke-dasharray="4.500,1.700"/><rect x="2046.800" y="507.09999999999997" width="16.400" height="16.400" fill="#f3f3f3" stroke="#8d8d8d" stroke-width="1.100"/><rect x="2043.600" y="533.9" width="22.800" height="22.800" fill="#fff" stroke="#5c5c5c" stroke-width="1.200" stroke-dasharray="4.500,1.700"/><rect x="2046.800" y="537.0999999999999" width="16.400" height="16.400" fill="#f3f3f3" stroke="#8d8d8d" stroke-width="1.100"/><rect x="2043.600" y="563.9" width="22.800" height="22.800" fill="#fff" stroke="#5c5c5c" stroke-width="1.200" stroke-dasharray="4.500,1.700"/><rect x="2046.800" y="567.0999999999999" width="16.400" height="16.400" fill="#f3f3f3" stroke="#8d8d8d" stroke-width="1.100"/><path d="M1994.500,605.3H2006" stroke="#5a5a5a" stroke-width="2.300" fill="none"/><rect x="2043.600" y="623.9" width="22.800" height="22.800" fill="#fff" stroke="#5c5c5c" stroke-width="1.200" stroke-dasharray="4.500,1.700"/><rect x="2046.800" y="627.0999999999999" width="16.400" height="16.400" fill="#f3f3f3" stroke="#8d8d8d" stroke-width="1.100"/><path d="M1994.500,665.3H2006M2000.200,659.5V671.0999999999999" stroke="#5a5a5a" stroke-width="2.300" fill="none"/><path d="M1994.500,695.3H2006" stroke="#5a5a5a" stroke-width="2.300" fill="none"/><rect x="2043.600" y="713.9" width="22.800" height="22.800" fill="#fff" stroke="#5c5c5c" stroke-width="1.200" stroke-dasharray="4.500,1.700"/><rect x="2046.800" y="717.0999999999999" width="16.400" height="16.400" fill="#62aee8" stroke="#3b87c8" stroke-width="1.100"/><rect x="2043.600" y="743.9" width="22.800" height="22.800" fill="#fff" stroke="#5c5c5c" stroke-width="1.200" stroke-dasharray="4.500,1.700"/><rect x="2046.800" y="747.0999999999999" width="16.400" height="16.400" fill="#f3f3f3" stroke="#8d8d8d" stroke-width="1.100"/><rect x="2043.600" y="773.9" width="22.800" height="22.800" fill="#fff" stroke="#5c5c5c" stroke-width="1.200" stroke-dasharray="4.500,1.700"/><rect x="2046.800" y="777.0999999999999" width="16.400" height="16.400" fill="#f3f3f3" stroke="#8d8d8d" stroke-width="1.100"/><rect x="2043.600" y="803.9" width="22.800" height="22.800" fill="#fff" stroke="#5c5c5c" stroke-width="1.200" stroke-dasharray="4.500,1.700"/><rect x="2046.800" y="807.0999999999999" width="16.400" height="16.400" fill="#f3f3f3" stroke="#8d8d8d" stroke-width="1.100"/><rect x="2043.600" y="833.9" width="22.800" height="22.800" fill="#fff" stroke="#5c5c5c" stroke-width="1.200" stroke-dasharray="4.500,1.700"/><rect x="2046.800" y="837.0999999999999" width="16.400" height="16.400" fill="#f3f3f3" stroke="#8d8d8d" stroke-width="1.100"/><rect x="2043.600" y="863.9" width="22.800" height="22.800" fill="#fff" stroke="#5c5c5c" stroke-width="1.200" stroke-dasharray="4.500,1.700"/><rect x="2046.800" y="867.0999999999999" width="16.400" height="16.400" fill="#f3f3f3" stroke="#8d8d8d" stroke-width="1.100"/><rect x="2043.600" y="893.9" width="22.800" height="22.800" fill="#fff" stroke="#5c5c5c" stroke-width="1.200" stroke-dasharray="4.500,1.700"/><rect x="2046.800" y="897.0999999999999" width="16.400" height="16.400" fill="#f3f3f3" stroke="#8d8d8d" stroke-width="1.100"/><rect x="2043.600" y="923.9" width="22.800" height="22.800" fill="#fff" stroke="#5c5c5c" stroke-width="1.200" stroke-dasharray="4.500,1.700"/><rect x="2046.800" y="927.0999999999999" width="16.400" height="16.400" fill="#f3f3f3" stroke="#8d8d8d" stroke-width="1.100"/><path d="M1994.500,965.3H2006M2000.200,959.5V971.0999999999999" stroke="#5a5a5a" stroke-width="2.300" fill="none"/><path d="M1994.500,995.3H2006M2000.200,989.5V1001.0999999999999" stroke="#5a5a5a" stroke-width="2.300" fill="none"/><path d="M1994.500,1025.3H2006" stroke="#5a5a5a" stroke-width="2.300" fill="none"/><rect x="2043.600" y="1043.8999999999999" width="22.800" height="22.800" fill="#fff" stroke="#5c5c5c" stroke-width="1.200" stroke-dasharray="4.500,1.700"/><rect x="2046.800" y="1047.1" width="16.400" height="16.400" fill="#62aee8" stroke="#3b87c8" stroke-width="1.100"/><rect x="2043.600" y="1073.8999999999999" width="22.800" height="22.800" fill="#fff" stroke="#5c5c5c" stroke-width="1.200" stroke-dasharray="4.500,1.700"/><rect x="2046.800" y="1077.1" width="16.400" height="16.400" fill="#62aee8" stroke="#3b87c8" stroke-width="1.100"/><rect x="2043.600" y="1103.8999999999999" width="22.800" height="22.800" fill="#fff" stroke="#5c5c5c" stroke-width="1.200" stroke-dasharray="4.500,1.700"/><rect x="2046.800" y="1107.1" width="16.400" height="16.400" fill="#62aee8" stroke="#3b87c8" stroke-width="1.100"/><rect x="2043.600" y="1133.8999999999999" width="22.800" height="22.800" fill="#fff" stroke="#5c5c5c" stroke-width="1.200" stroke-dasharray="4.500,1.700"/><rect x="2046.800" y="1137.1" width="16.400" height="16.400" fill="#62aee8" stroke="#3b87c8" stroke-width="1.100"/><path d="M1994.500,1175.3H2006M2000.200,1169.5V1181.1" stroke="#5a5a5a" stroke-width="2.300" fill="none"/><path d="M1994.500,1205.3H2006" stroke="#5a5a5a" stroke-width="2.300" fill="none"/><rect x="2043.600" y="1223.8999999999999" width="22.800" height="22.800" fill="#fff" stroke="#5c5c5c" stroke-width="1.200" stroke-dasharray="4.500,1.700"/><rect x="2046.800" y="1227.1" width="16.400" height="16.400" fill="#62aee8" stroke="#3b87c8" stroke-width="1.100"/><rect x="2043.600" y="1253.8999999999999" width="22.800" height="22.800" fill="#fff" stroke="#5c5c5c" stroke-width="1.200" stroke-dasharray="4.500,1.700"/><rect x="2046.800" y="1257.1" width="16.400" height="16.400" fill="#62aee8" stroke="#3b87c8" stroke-width="1.100"/><rect x="2043.600" y="1283.8999999999999" width="22.800" height="22.800" fill="#fff" stroke="#5c5c5c" stroke-width="1.200" stroke-dasharray="4.500,1.700"/><rect x="2046.800" y="1287.1" width="16.400" height="16.400" fill="#62aee8" stroke="#3b87c8" stroke-width="1.100"/><rect x="2043.600" y="1313.8999999999999" width="22.800" height="22.800" fill="#fff" stroke="#5c5c5c" stroke-width="1.200" stroke-dasharray="4.500,1.700"/><rect x="2046.800" y="1317.1" width="16.400" height="16.400" fill="#62aee8" stroke="#3b87c8" stroke-width="1.100"/><rect x="2043.600" y="1343.8999999999999" width="22.800" height="22.800" fill="#fff" stroke="#5c5c5c" stroke-width="1.200" stroke-dasharray="4.500,1.700"/><rect x="2046.800" y="1347.1" width="16.400" height="16.400" fill="#62aee8" stroke="#3b87c8" stroke-width="1.100"/><path d="M1994.500,1385.3H2006M2000.200,1379.5V1391.1" stroke="#5a5a5a" stroke-width="2.300" fill="none"/><path d="M1994.500,1415.3H2006M2000.200,1409.5V1421.1" stroke="#5a5a5a" stroke-width="2.300" fill="none"/><path d="M1994.500,1445.3H2006M2000.200,1439.5V1451.1" stroke="#5a5a5a" stroke-width="2.300" fill="none"/><g transform="translate(1994,1463.3)"><rect x="0.800" y="0.800" width="22.500" height="21.500" fill="#fff" stroke="#555" stroke-width="1.500"/><rect x="0.800" y="0.800" width="22.500" height="4" fill="#555"/><g fill="none" stroke="#555" stroke-width="1.200"><rect x="4" y="8" width="4" height="3.500"/><circle cx="6" cy="16.500" r="2.200"/></g><path d="M11,8.500h4M17,8.500h3.500M11,11.500h9.500M11,15h4M17,15h3.500M11,18h9.500" stroke="#555" stroke-width="1.200"/></g></svg>
<div class="a" style="left:0px;top:1490px;width:2559px;height:36px;background:#f5f5f5;"></div>
<span class="t" style="left:2.60px;top:1501.86px;font-size:18px;color:#333;letter-spacing:-0.380px;word-spacing:0.630px;">Click to select, <span style="letter-spacing:-1.130px">TAB </span>for alternates, <span style="letter-spacing:-1.130px">CTRL </span>adds, <span style="letter-spacing:-1.130px">SHIFT </span>unselects.</span>
<svg class="a" style="left:0px;top:1490px;" width="2559" height="36" viewBox="0 1490 2559 36"><g transform="translate(1117,1496)"><rect x="10" y="1" width="8" height="15" rx="1" fill="#e0824a" stroke="#b5622f" stroke-width="0.800"/><rect x="1" y="4" width="8" height="16" rx="1" fill="#4c9be0" stroke="#2d78bd" stroke-width="0.800"/><rect x="8" y="9" width="9" height="15" rx="1" fill="#3fae5a" stroke="#2a8a44" stroke-width="0.800"/><path d="M16,22l6-6" stroke="#2b7fd6" stroke-width="3"/><circle cx="22.500" cy="15" r="3" fill="none" stroke="#2b7fd6" stroke-width="2"/></g><rect x="1150" y="1523" width="310" height="1.500" fill="#d0d0d0"/><path d="M1443,1507L1447.500,1512L1452,1507" fill="none" stroke="#b0b0b0" stroke-width="1.600"/><g fill="none" stroke="#9a9a9a" stroke-width="1.500"><circle cx="1475" cy="1508.500" r="3.600"/><path d="M1468.500,1520.500c0-5 2.500-7 6.500-7s6.500,2 6.500,7z"/><path d="M1478.500,1497.500h10v8h-5l-2.500,2.500v-2.500h-2.500z"/></g><g transform="translate(1533,1497.500)"><rect x="0.900" y="0.900" width="22" height="21.500" fill="#fff" stroke="#222" stroke-width="1.700"/><rect x="0.900" y="0.900" width="22" height="3.500" fill="#222"/><path d="M4,8.500h2.500M9,8.500h11M4,13h2.500M9,13h11M4,17.500h2.500M9,17.500h11" stroke="#222" stroke-width="1.800"/></g><g transform="translate(1570,1497.500)"><rect x="3.500" y="0.900" width="19.500" height="18.500" fill="#fff" stroke="#8a8a8a" stroke-width="1.500"/><rect x="3.500" y="0.900" width="19.500" height="3" fill="#8a8a8a"/><path d="M7,7.500h2M11,7.500h9M7,11.500h2M11,11.500h9M7,15.500h2M11,15.500h9" stroke="#8a8a8a" stroke-width="1.500"/><path d="M0,19.500h7" stroke="#8a8a8a" stroke-width="2.500"/><polygon points="6,15.500 11.500,19.500 6,23.500" fill="#8a8a8a"/></g><rect x="1601" y="1523" width="310.500" height="1.500" fill="#d0d0d0"/><path d="M1894.500,1507L1899,1512L1903.500,1507" fill="none" stroke="#b0b0b0" stroke-width="1.600"/><g transform="translate(2239,1497)"><rect x="1" y="1" width="19" height="7" rx="3.500" fill="none" stroke="#e8873a" stroke-width="1.600"/><path d="M8,4.500h5" stroke="#e8873a" stroke-width="1.600"/></g><polygon transform="translate(2251,1508) scale(1.0)" points="0,0 0,11 2.600,8.800 4.600,13 6.600,12 4.700,8 8,8" fill="#fff" stroke="#222" stroke-width="1.200" stroke-linejoin="round"/><g transform="translate(2274,1497)"><polygon points="1,10 8,2 15,4 9,11" fill="#4c9be0"/><polygon points="0,14 12,14 14,11 2,11" fill="#4c9be0"/><path d="M15,1l7,7M22,1l-7,7" stroke="#e02222" stroke-width="2.200"/></g><polygon transform="translate(2286,1508) scale(1.0)" points="0,0 0,11 2.600,8.800 4.600,13 6.600,12 4.700,8 8,8" fill="#fff" stroke="#222" stroke-width="1.200" stroke-linejoin="round"/><g transform="translate(2312,1497)" fill="none" stroke="#555" stroke-width="1.400"><path d="M4,1.500h9M5.500,1.500v5.500l-2.500,3h11l-2.500-3v-5.500M8.500,10v6"/></g><polygon transform="translate(2321,1508) scale(1.0)" points="0,0 0,11 2.600,8.800 4.600,13 6.600,12 4.700,8 8,8" fill="#fff" stroke="#222" stroke-width="1.200" stroke-linejoin="round"/><g transform="translate(2346,1497)"><polygon points="1,7 9,2 9,18 1,23" fill="#4c9be0"/><path d="M12,1l7,7M19,1l-7,7" stroke="#e02222" stroke-width="2.200"/></g><polygon transform="translate(2358,1508) scale(1.0)" points="0,0 0,11 2.600,8.800 4.600,13 6.600,12 4.700,8 8,8" fill="#fff" stroke="#222" stroke-width="1.200" stroke-linejoin="round"/><g transform="translate(2383,1497)"><path d="M9,1v17M1,9.500h14" stroke="#222" stroke-width="1.400"/><polygon points="9,0 11.500,3.500 6.500,3.500" fill="#222"/><polygon points="0,9.500 3.500,7 3.500,12" fill="#222"/><polygon points="16,9.500 12.500,7 12.500,12" fill="#222"/></g><polygon transform="translate(2396,1508) scale(1.0)" points="0,0 0,11 2.600,8.800 4.600,13 6.600,12 4.700,8 8,8" fill="#fff" stroke="#222" stroke-width="1.200" stroke-linejoin="round"/><circle cx="2436.8" cy="1510.0" r="1.900" fill="#d0d0d0"/><circle cx="2434.4" cy="1515.9" r="1.900" fill="#d0d0d0"/><circle cx="2428.5" cy="1518.3" r="1.900" fill="#d0d0d0"/><circle cx="2422.6" cy="1515.9" r="1.900" fill="#d0d0d0"/><circle cx="2420.2" cy="1510.0" r="1.900" fill="#d0d0d0"/><circle cx="2422.6" cy="1504.1" r="1.900" fill="#d0d0d0"/><circle cx="2428.5" cy="1501.7" r="1.900" fill="#d0d0d0"/><circle cx="2434.4" cy="1504.1" r="1.900" fill="#d0d0d0"/><path d="M2450.500,1499h22l-8.300,9.500v11.500l-5.400-2.500v-9z" fill="#f2f2f2" stroke="#555" stroke-width="1.600" stroke-linejoin="round"/></svg>
<span class="t" style="left:1486.50px;top:1504.09px;font-size:17.5px;color:#9a9a9a;letter-spacing:-1.109px;">:0</span>
<span class="t" style="left:1606.70px;top:1503.16px;font-size:18px;color:#a6a6a6;letter-spacing:0.132px;word-spacing:-0.132px;">Main Model</span>
<span class="t" style="left:2477.00px;top:1504.09px;font-size:17.5px;color:#444;letter-spacing:-1.809px;">:0</span>
</div></body></html>
